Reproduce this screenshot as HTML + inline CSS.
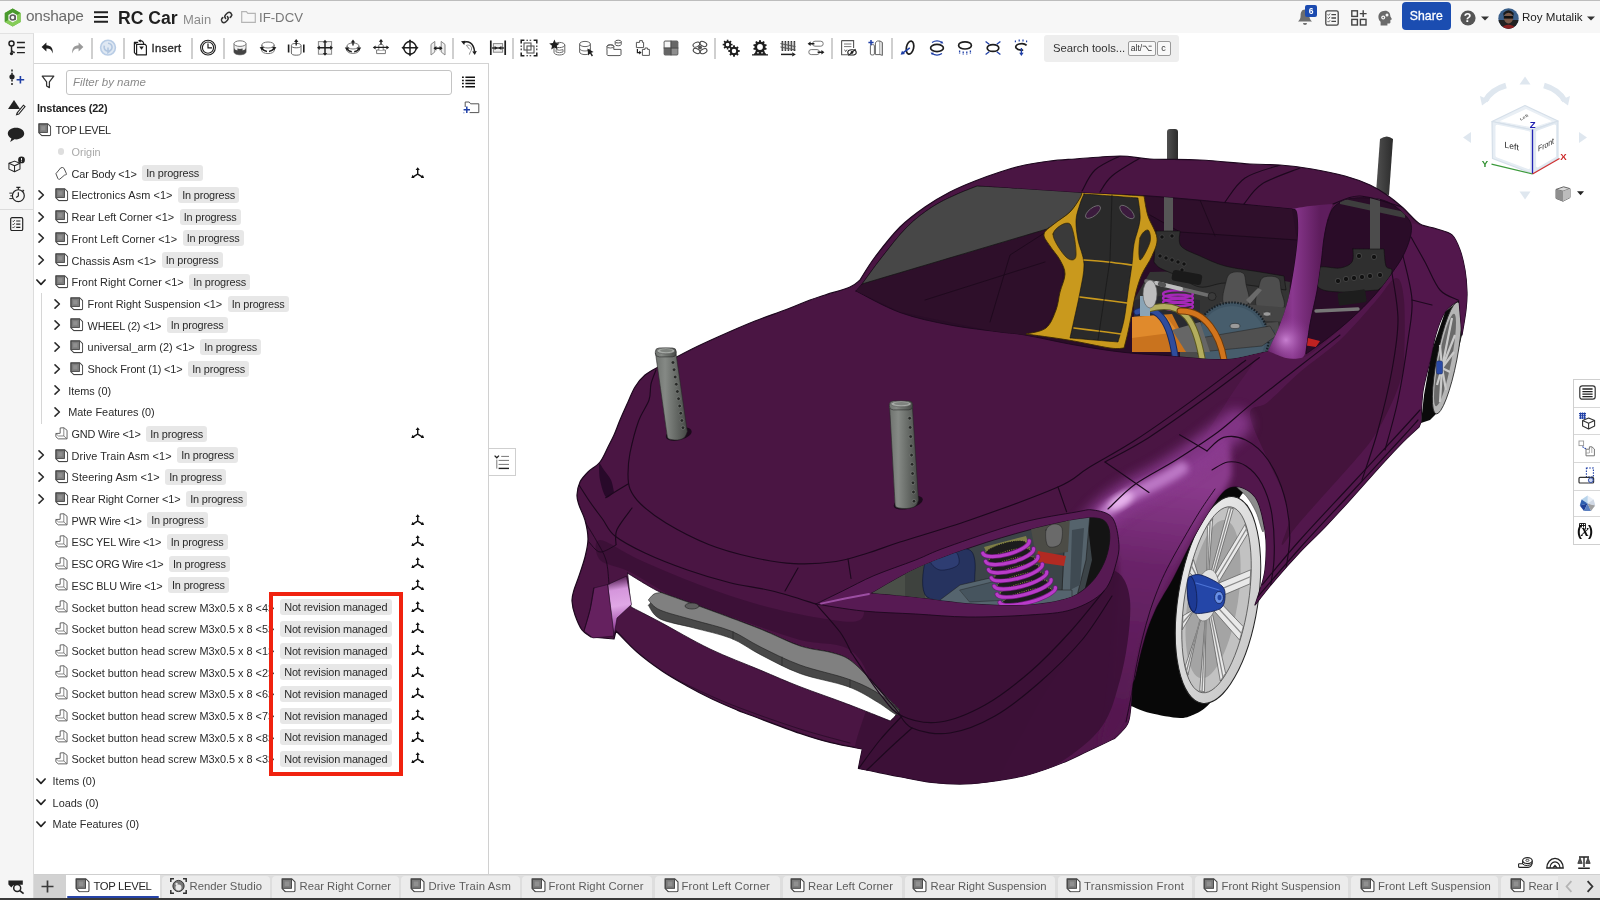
<!DOCTYPE html>
<html lang="en">
<head>
<meta charset="utf-8">
<title>RC Car | TOP LEVEL</title>
<style>
*{box-sizing:border-box;margin:0;padding:0}
html,body{width:1600px;height:900px;overflow:hidden;background:#fff}
body{font-family:"Liberation Sans",sans-serif;color:#222;font-size:12px;position:relative}
.abs{position:absolute}
#panelc,#hdrc,#tbc,#tabsc,#sidec,#view{will-change:transform}
svg{display:block;overflow:visible}
/* header */
#hdr{left:0;top:0;width:1600px;height:33px;background:#f7f7f7;border-top:1px solid #bdbdbd}
#hdrc .t{position:absolute;white-space:nowrap;height:auto}
/* sidebar */
#side{left:0;top:33px;width:33.5px;height:865px;background:#f5f5f5;border-right:1px solid #dcdcdc;border-top:1px solid #e2e2e2}
/* toolbar */
#tb{left:34px;top:33px;width:1566px;height:30px;background:#fff}
.sep{position:absolute;top:6px;width:1px;height:19px;background:#cfcfcf}
/* panel */
#panel{left:34px;top:63px;width:455px;height:811px;background:#fff;border-top:1px solid #d4d4d4;border-right:1px solid #d0d0d0}
#filter{border:1px solid #c4c4c4;border-radius:3px;background:#fff}
#filter span{position:absolute;left:6px;top:5px;font-style:italic;color:#8a8a8a;font-size:11.5px}
.t{font-size:10.9px;line-height:16px;height:16px;white-space:nowrap}
.bd{font-size:10.9px;line-height:16px;height:16px;white-space:nowrap;background:#e7e7e7;border-radius:3px;color:#2a2a2a;padding-left:4.2px}
.tt{font-size:11.3px;line-height:16px;height:16px;white-space:nowrap}
/* tabs */
#tabs{left:34px;top:874px;width:1566px;height:24px;background:#dedede;border-top:1px solid #cfcfcf}
.tab{position:absolute;top:1px;height:23px;background:#eaeaea;border-radius:4px 4px 0 0;font-size:12px;color:#5a5a5a;white-space:nowrap}
.tab span{position:absolute;top:4px}
#botline{left:0;top:898.4px;width:1600px;height:1.6px;background:#3a3a3a}
</style>
</head>
<body>
<svg width="0" height="0" style="position:absolute"><defs>
<symbol id="i-asm" viewBox="0 0 14 14"><path d="M.8,.8 H10.2 L13.2,3.8 V12 Q13.2,13.2 12,13.2 H4 L.8,10 Z" fill="#fff" stroke="#444" stroke-width="1.05" stroke-linejoin="round"/><rect x="1.3" y="1.3" width="8.6" height="8.6" fill="#7c7c7c" stroke="#454545" stroke-width=".9"/><rect x="3.4" y="3.4" width="4.4" height="4.4" fill="#909090"/></symbol>
<symbol id="i-part" viewBox="0 0 14 14"><path d="M5.4,1 L9.2,.8 L12.6,3.4 V12.4 H3.4 L.9,10.2 V6.8 L5.4,6.6 Z" fill="#fff" stroke="#555" stroke-width=".95" stroke-linejoin="round"/><path d="M9.2,.8 V9.4 H3.6 M9.2,9.4 L12.4,12.2 M.9,6.8 L3.6,9.4" fill="none" stroke="#666" stroke-width=".8"/></symbol>
<symbol id="i-surf" viewBox="0 0 14 14"><path d="M1,7.2 L6.2,.9 Q8.6,-.2 9.8,1.6 L12.2,7 Q13,8.2 11.4,8.4 L10.2,8.8 L5,13.2 Q3.6,13.6 3,12.2 Z" fill="#fff" stroke="#444" stroke-width="1" stroke-linejoin="round"/></symbol>
<symbol id="i-mate" viewBox="0 0 14 14"><path d="M7,7.4 V2 M7,7.4 L1.8,10.6 M7,7.4 L12.2,10.6" stroke="#111" stroke-width="1.5" fill="none"/><path d="M7,.2 L9.2,3.2 H4.8Z M.3,11.6 L1.6,8.2 L3.8,11.6Z M13.7,11.6 L12.4,8.2 L10.2,11.6Z" fill="#111"/></symbol>
<symbol id="i-chr" viewBox="0 0 10 12"><path d="M3,1.9 L7.4,6 L3,10.1" fill="none" stroke="#2a2a2a" stroke-width="1.55" stroke-linecap="round" stroke-linejoin="round"/></symbol>
<symbol id="i-chd" viewBox="0 0 12 10"><path d="M1.9,3 L6,7.4 L10.1,3" fill="none" stroke="#222" stroke-width="1.7" stroke-linecap="round" stroke-linejoin="round"/></symbol>
</defs></svg>

<!-- VIEWPORT -->
<div class="abs" id="view" style="left:0;top:0;width:1600px;height:900px;background:#fff">
<svg class="abs" style="left:0;top:0" width="1600" height="900" viewBox="0 0 1600 900">
<defs>
<linearGradient id="gpost" x1="0" x2="1" y1="0" y2="0"><stop offset="0" stop-color="#6f736f"/><stop offset=".3" stop-color="#858985"/><stop offset=".6" stop-color="#6a6e6a"/><stop offset="1" stop-color="#454845"/></linearGradient>
<linearGradient id="gpostd" x1="0" x2="1" y1="0" y2="0"><stop offset="0" stop-color="#505050"/><stop offset="1" stop-color="#2c2c2c"/></linearGradient>
<radialGradient id="gfender" cx="1112" cy="500" r="150" gradientUnits="userSpaceOnUse" gradientTransform="rotate(-38 1112 500) scale(1 .45) translate(0 610)"><stop offset="0" stop-color="#d79be0"/><stop offset=".12" stop-color="#a24fa8"/><stop offset=".4" stop-color="#6a226a"/><stop offset="1" stop-color="#4a1747" stop-opacity="0"/></radialGradient>
<linearGradient id="gflap" x1="612" y1="578" x2="622" y2="634" gradientUnits="userSpaceOnUse"><stop offset="0" stop-color="#4e184c"/><stop offset=".22" stop-color="#d596dc"/><stop offset=".5" stop-color="#e0a8e6"/><stop offset=".8" stop-color="#a858ae"/><stop offset="1" stop-color="#7a2c7c"/></linearGradient>
<linearGradient id="gpillar" x1="1270" y1="0" x2="1320" y2="0" gradientUnits="userSpaceOnUse"><stop offset="0" stop-color="#611e61"/><stop offset=".45" stop-color="#8a388f"/><stop offset="1" stop-color="#5e1d5d"/></linearGradient>
<radialGradient id="gpillarhi" cx="1286" cy="340" r="26" gradientUnits="userSpaceOnUse"><stop offset="0" stop-color="#c77fd0"/><stop offset="1" stop-color="#8a3690" stop-opacity="0"/></radialGradient>
<linearGradient id="grim" x1="0" x2="1" y1="0" y2="1"><stop offset="0" stop-color="#efefef"/><stop offset="1" stop-color="#c4c4c4"/></linearGradient>
<filter id="bl6" x="-0.3" y="-0.3" width="1.6" height="1.6"><feGaussianBlur stdDeviation="6"/></filter><filter id="bl3" x="-0.3" y="-0.3" width="1.6" height="1.6"><feGaussianBlur stdDeviation="3"/></filter><clipPath id="cbody"><path d="M577.0,495.0C577.2,491.2 578.2,485.8 580.0,482.0C581.8,478.2 584.7,475.3 588.0,472.0C591.3,468.7 596.7,466.2 600.0,462.0C603.3,457.8 605.7,451.5 608.0,447.0C610.3,442.5 612.0,439.5 614.0,435.0C616.0,430.5 617.7,425.5 620.0,420.0C622.3,414.5 625.5,407.5 628.0,402.0C630.5,396.5 632.2,391.5 635.0,387.0C637.8,382.5 640.8,378.5 645.0,375.0C649.2,371.5 652.2,370.3 660.0,366.0C667.8,361.7 682.0,354.0 692.0,349.0C702.0,344.0 709.5,340.7 720.0,336.0C730.5,331.3 744.2,325.3 755.0,321.0C765.8,316.7 775.8,313.5 785.0,310.0C794.2,306.5 803.3,302.5 810.0,300.0C816.7,297.5 818.3,297.2 825.0,295.0C831.7,292.8 844.2,289.5 850.0,287.0C855.8,284.5 858.3,281.2 860.0,280.0C862.5,276.2 868.3,265.8 875.0,257.0C881.7,248.2 891.7,235.3 900.0,227.0C908.3,218.7 916.7,212.8 925.0,207.0C933.3,201.2 941.7,196.3 950.0,192.0C958.3,187.7 966.7,184.3 975.0,181.0C983.3,177.7 991.7,174.7 1000.0,172.0C1008.3,169.3 1016.7,166.8 1025.0,165.0C1033.3,163.2 1041.7,162.0 1050.0,161.0C1058.3,160.0 1063.3,159.8 1075.0,159.0C1086.7,158.2 1107.5,156.0 1120.0,156.0C1132.5,156.0 1136.7,158.3 1150.0,159.0C1163.3,159.7 1183.3,159.2 1200.0,160.0C1216.7,160.8 1236.7,163.2 1250.0,164.0C1263.3,164.8 1269.7,164.2 1280.0,165.0C1290.3,165.8 1301.2,167.2 1312.0,169.0C1322.8,170.8 1335.3,173.3 1345.0,176.0C1354.7,178.7 1363.0,181.8 1370.0,185.0C1377.0,188.2 1381.7,191.3 1387.0,195.0C1392.3,198.7 1397.3,202.8 1402.0,207.0C1406.7,211.2 1411.7,217.0 1415.0,220.0C1418.3,223.0 1418.3,223.5 1422.0,225.0C1425.7,226.5 1432.0,227.3 1437.0,229.0C1442.0,230.7 1448.2,231.5 1452.0,235.0C1455.8,238.5 1457.8,244.2 1460.0,250.0C1462.2,255.8 1463.8,263.0 1465.0,270.0C1466.2,277.0 1466.8,285.3 1467.0,292.0C1467.2,298.7 1466.8,302.8 1466.0,310.0C1465.2,317.2 1462.7,330.8 1462.0,335.0C1461.5,329.2 1459.5,305.8 1459.0,300.0C1456.7,302.0 1448.8,306.3 1445.0,312.0C1441.2,317.7 1438.5,325.8 1436.0,334.0C1433.5,342.2 1432.2,351.5 1430.0,361.0C1427.8,370.5 1424.5,380.8 1423.0,391.0C1421.5,401.2 1421.3,416.8 1421.0,422.0C1420.7,422.8 1419.3,426.2 1419.0,427.0C1415.8,430.0 1407.3,437.5 1400.0,445.0C1392.7,452.5 1383.3,462.8 1375.0,472.0C1366.7,481.2 1358.3,490.8 1350.0,500.0C1341.7,509.2 1333.3,518.3 1325.0,527.0C1316.7,535.7 1308.3,543.2 1300.0,552.0C1291.7,560.8 1282.5,571.2 1275.0,580.0C1267.5,588.8 1258.3,600.8 1255.0,605.0C1255.8,602.5 1258.3,595.8 1260.0,590.0C1261.7,584.2 1264.0,578.3 1265.0,570.0C1266.0,561.7 1266.5,549.2 1266.0,540.0C1265.5,530.8 1263.8,522.2 1262.0,515.0C1260.2,507.8 1258.7,501.7 1255.0,497.0C1251.3,492.3 1245.0,488.2 1240.0,487.0C1235.0,485.8 1230.0,486.2 1225.0,490.0C1220.0,493.8 1215.0,502.5 1210.0,510.0C1205.0,517.5 1199.7,526.7 1195.0,535.0C1190.3,543.3 1185.8,552.5 1182.0,560.0C1178.2,567.5 1175.3,573.8 1172.0,580.0C1168.7,586.2 1164.8,592.0 1162.0,597.0C1159.2,602.0 1157.5,604.5 1155.0,610.0C1152.5,615.5 1149.5,622.5 1147.0,630.0C1144.5,637.5 1142.0,647.2 1140.0,655.0C1138.0,662.8 1136.3,672.0 1135.0,677.0C1133.7,682.0 1133.1,679.9 1132.4,685.0C1131.7,690.1 1131.5,701.1 1130.7,707.6C1129.9,714.1 1130.0,719.1 1127.5,724.0C1125.0,728.9 1118.8,734.3 1116.0,737.0C1113.2,739.7 1115.8,737.6 1111.0,740.0C1106.2,742.4 1095.2,747.7 1087.0,751.5C1078.8,755.3 1071.5,759.2 1062.0,763.0C1052.5,766.8 1040.8,771.2 1030.0,774.2C1019.2,777.2 1007.8,779.1 997.0,780.7C986.2,782.3 975.8,783.7 965.0,784.0C954.2,784.3 942.8,783.6 932.0,782.4C921.2,781.2 909.0,778.4 900.0,776.7C891.0,775.0 884.9,773.7 878.0,772.3C871.1,770.9 861.7,769.0 858.4,768.4C859.0,765.2 861.6,752.2 862.3,749.0C857.1,748.0 841.4,745.3 831.0,742.7C820.6,740.1 813.5,738.0 800.0,733.4C786.5,728.8 760.5,718.9 750.0,715.0C739.5,711.1 743.3,712.7 737.0,710.0C730.7,707.3 720.3,703.0 712.0,699.0C703.7,695.0 695.3,690.7 687.0,686.0C678.7,681.3 670.3,676.7 662.0,671.0C653.7,665.3 644.7,658.7 637.0,652.0C629.3,645.3 619.5,634.5 616.0,631.0C615.7,632.3 614.3,637.7 614.0,639.0C610.2,638.7 594.8,637.3 591.0,637.0C589.5,635.8 584.7,633.7 582.0,630.0C579.3,626.3 576.7,619.8 575.0,615.0C573.3,610.2 572.2,605.2 572.0,601.0C571.8,596.8 572.8,594.2 574.0,590.0C575.2,585.8 577.2,581.5 579.0,576.0C580.8,570.5 583.5,563.2 585.0,557.0C586.5,550.8 588.0,545.2 588.0,539.0C588.0,532.8 586.5,525.7 585.0,520.0C583.5,514.3 580.3,509.2 579.0,505.0C577.7,500.8 576.8,498.8 577.0,495.0Z"/></clipPath>
</defs>
<path d="M1421.0,423.0 L1424.0,395.0 L1432.0,350.0 L1445.0,312.0 L1459.0,300.0 L1462.0,335.0 L1453.0,372.0 L1446.0,396.0 L1438.0,412.0 L1430.0,420.0Z" fill="#0b0b0b" />
<ellipse cx="1447" cy="358" rx="10" ry="57" transform="rotate(11 1447 358)" fill="#b5b5b5" stroke="#222" stroke-width=".8"/>
<ellipse cx="1445" cy="360" rx="6.5" ry="47" transform="rotate(11 1445 360)" fill="#6a6a6a"/>
<line x1="1442" y1="368" x2="1452" y2="318" stroke="#c9c9c9" stroke-width="2.2"/>
<line x1="1442" y1="368" x2="1455" y2="335" stroke="#c9c9c9" stroke-width="2.2"/>
<line x1="1442" y1="368" x2="1454" y2="352" stroke="#c9c9c9" stroke-width="2.2"/>
<line x1="1442" y1="368" x2="1450" y2="372" stroke="#c9c9c9" stroke-width="2.2"/>
<line x1="1442" y1="368" x2="1446" y2="390" stroke="#c9c9c9" stroke-width="2.2"/>
<line x1="1442" y1="368" x2="1440" y2="402" stroke="#c9c9c9" stroke-width="2.2"/>
<line x1="1442" y1="368" x2="1437" y2="385" stroke="#c9c9c9" stroke-width="2.2"/>
<line x1="1442" y1="368" x2="1440" y2="345" stroke="#c9c9c9" stroke-width="2.2"/>
<rect x="1436.5" y="361" width="6" height="13" rx="1.5" fill="#2a4aa6" stroke="#13245c" stroke-width=".5"/>
<rect x="1167" y="129" width="11" height="40" rx="3" fill="url(#gpostd)"/>
<path d="M1380,139 Q1387,134 1393,139 L1389,195 L1376,193Z" fill="url(#gpostd)" />
<path d="M1224.0,489.0C1231.2,482.2 1234.2,484.0 1238.0,484.0C1241.8,484.0 1245.5,488.2 1247.0,489.0C1245.2,491.7 1240.5,493.2 1236.0,505.0C1231.5,516.8 1223.7,537.5 1220.0,560.0C1216.3,582.5 1215.2,616.7 1214.0,640.0C1212.8,663.3 1213.2,690.0 1213.0,700.0C1211.7,701.3 1208.0,705.7 1205.0,708.0C1202.0,710.3 1199.2,712.3 1195.0,714.0C1190.8,715.7 1187.5,718.2 1180.0,718.0C1172.5,717.8 1158.2,715.0 1150.0,713.0C1141.8,711.0 1134.2,707.2 1131.0,706.0C1130.5,703.3 1126.5,701.0 1128.0,690.0C1129.5,679.0 1133.8,658.3 1140.0,640.0C1146.2,621.7 1155.8,599.2 1165.0,580.0C1174.2,560.8 1185.2,540.2 1195.0,525.0C1204.8,509.8 1216.8,495.8 1224.0,489.0Z" fill="#080808" />
<path d="M1236.0,486.0C1236.2,484.5 1244.3,485.8 1248.0,488.0C1251.7,490.2 1255.5,494.7 1258.0,499.0C1260.5,503.3 1262.2,508.5 1263.0,514.0C1263.8,519.5 1264.2,532.3 1263.0,532.0C1261.8,531.7 1258.7,517.8 1256.0,512.0C1253.3,506.2 1250.3,501.3 1247.0,497.0C1243.7,492.7 1235.8,487.5 1236.0,486.0Z" fill="#8d8d8d" stroke="#333" stroke-width="0.5" stroke-linejoin="round" stroke-linecap="round" />
<g transform="rotate(8.8 1218 600)">
<ellipse cx="1218" cy="600" rx="40" ry="104.5" fill="url(#grim)" stroke="#222" stroke-width="1"/>
<ellipse cx="1216.5" cy="600" rx="32" ry="94" fill="#c2c2c2" stroke="#3c3c3c" stroke-width=".7"/>
<ellipse cx="1213" cy="600" rx="25" ry="80" fill="#a4a4a4"/>
<path d="M1205,590 L1247.1,622.5 L1245.5,636.3 L1207,604Z" fill="#e9e9e9" stroke="#4a4a4a" stroke-width=".6" stroke-linejoin="round"/>
<line x1="1206" y1="597" x2="1246.3" y2="629.4" stroke="#8a8a8a" stroke-width="1.3"/>
<path d="M1205,590 L1236.7,671.2 L1232.7,679.7 L1207,604Z" fill="#e9e9e9" stroke="#4a4a4a" stroke-width=".6" stroke-linejoin="round"/>
<line x1="1206" y1="597" x2="1234.7" y2="675.5" stroke="#8a8a8a" stroke-width="1.3"/>
<path d="M1205,590 L1218.7,692.8 L1213.8,692.6 L1207,604Z" fill="#e9e9e9" stroke="#4a4a4a" stroke-width=".6" stroke-linejoin="round"/>
<line x1="1206" y1="597" x2="1216.2" y2="692.7" stroke="#8a8a8a" stroke-width="1.3"/>
<path d="M1205,590 L1199.8,678.9 L1195.8,670.2 L1207,604Z" fill="#e9e9e9" stroke="#4a4a4a" stroke-width=".6" stroke-linejoin="round"/>
<line x1="1206" y1="597" x2="1197.8" y2="674.5" stroke="#8a8a8a" stroke-width="1.3"/>
<path d="M1205,590 L1187.3,634.8 L1185.8,620.9 L1207,604Z" fill="#e9e9e9" stroke="#4a4a4a" stroke-width=".6" stroke-linejoin="round"/>
<line x1="1206" y1="597" x2="1186.6" y2="627.9" stroke="#8a8a8a" stroke-width="1.3"/>
<path d="M1205,590 L1185.9,577.5 L1187.5,563.7 L1207,604Z" fill="#e9e9e9" stroke="#4a4a4a" stroke-width=".6" stroke-linejoin="round"/>
<line x1="1206" y1="597" x2="1186.7" y2="570.6" stroke="#8a8a8a" stroke-width="1.3"/>
<path d="M1205,590 L1196.3,528.8 L1200.3,520.3 L1207,604Z" fill="#e9e9e9" stroke="#4a4a4a" stroke-width=".6" stroke-linejoin="round"/>
<line x1="1206" y1="597" x2="1198.3" y2="524.5" stroke="#8a8a8a" stroke-width="1.3"/>
<path d="M1205,590 L1214.3,507.2 L1219.2,507.4 L1207,604Z" fill="#e9e9e9" stroke="#4a4a4a" stroke-width=".6" stroke-linejoin="round"/>
<line x1="1206" y1="597" x2="1216.8" y2="507.3" stroke="#8a8a8a" stroke-width="1.3"/>
<path d="M1205,590 L1233.2,521.1 L1237.2,529.8 L1207,604Z" fill="#e9e9e9" stroke="#4a4a4a" stroke-width=".6" stroke-linejoin="round"/>
<line x1="1206" y1="597" x2="1235.2" y2="525.5" stroke="#8a8a8a" stroke-width="1.3"/>
<path d="M1205,590 L1245.7,565.2 L1247.2,579.1 L1207,604Z" fill="#e9e9e9" stroke="#4a4a4a" stroke-width=".6" stroke-linejoin="round"/>
<line x1="1206" y1="597" x2="1246.4" y2="572.1" stroke="#8a8a8a" stroke-width="1.3"/>
<ellipse cx="1206" cy="597" rx="12" ry="26" fill="#e2e2e2" stroke="#666" stroke-width=".6"/>
</g>
<path d="M1189.0,580.0C1190.0,575.8 1191.5,575.7 1194.0,575.0C1196.5,574.3 1199.3,574.2 1204.0,576.0C1208.7,577.8 1218.5,582.5 1222.0,586.0C1225.5,589.5 1225.2,593.3 1225.0,597.0C1224.8,600.7 1224.5,605.3 1221.0,608.0C1217.5,610.7 1208.7,612.3 1204.0,613.0C1199.3,613.7 1195.7,614.2 1193.0,612.0C1190.3,609.8 1188.7,605.3 1188.0,600.0C1187.3,594.7 1188.0,584.2 1189.0,580.0Z" fill="#2446a8" stroke="#0e1a4c" stroke-width="0.8" stroke-linejoin="round" stroke-linecap="round" />
<ellipse cx="1192" cy="594" rx="4.6" ry="18" fill="#1d3a94" stroke="#0e1a4c" stroke-width=".7" transform="rotate(-6 1192 594)"/>
<path d="M1196.0,583.0 L1219.0,590.0" fill="none" stroke="#4d74d6" stroke-width="1.2" stroke-linejoin="round" stroke-linecap="round" />
<ellipse cx="1219" cy="597.5" rx="4.4" ry="6" fill="#6a90e6" stroke="#0e1a4c" stroke-width=".7"/>
<ellipse cx="1219.5" cy="597.5" rx="2" ry="2.8" fill="#2446a8"/>
<path d="M577.0,495.0C577.2,491.2 578.2,485.8 580.0,482.0C581.8,478.2 584.7,475.3 588.0,472.0C591.3,468.7 596.7,466.2 600.0,462.0C603.3,457.8 605.7,451.5 608.0,447.0C610.3,442.5 612.0,439.5 614.0,435.0C616.0,430.5 617.7,425.5 620.0,420.0C622.3,414.5 625.5,407.5 628.0,402.0C630.5,396.5 632.2,391.5 635.0,387.0C637.8,382.5 640.8,378.5 645.0,375.0C649.2,371.5 652.2,370.3 660.0,366.0C667.8,361.7 682.0,354.0 692.0,349.0C702.0,344.0 709.5,340.7 720.0,336.0C730.5,331.3 744.2,325.3 755.0,321.0C765.8,316.7 775.8,313.5 785.0,310.0C794.2,306.5 803.3,302.5 810.0,300.0C816.7,297.5 818.3,297.2 825.0,295.0C831.7,292.8 844.2,289.5 850.0,287.0C855.8,284.5 858.3,281.2 860.0,280.0C862.5,276.2 868.3,265.8 875.0,257.0C881.7,248.2 891.7,235.3 900.0,227.0C908.3,218.7 916.7,212.8 925.0,207.0C933.3,201.2 941.7,196.3 950.0,192.0C958.3,187.7 966.7,184.3 975.0,181.0C983.3,177.7 991.7,174.7 1000.0,172.0C1008.3,169.3 1016.7,166.8 1025.0,165.0C1033.3,163.2 1041.7,162.0 1050.0,161.0C1058.3,160.0 1063.3,159.8 1075.0,159.0C1086.7,158.2 1107.5,156.0 1120.0,156.0C1132.5,156.0 1136.7,158.3 1150.0,159.0C1163.3,159.7 1183.3,159.2 1200.0,160.0C1216.7,160.8 1236.7,163.2 1250.0,164.0C1263.3,164.8 1269.7,164.2 1280.0,165.0C1290.3,165.8 1301.2,167.2 1312.0,169.0C1322.8,170.8 1335.3,173.3 1345.0,176.0C1354.7,178.7 1363.0,181.8 1370.0,185.0C1377.0,188.2 1381.7,191.3 1387.0,195.0C1392.3,198.7 1397.3,202.8 1402.0,207.0C1406.7,211.2 1411.7,217.0 1415.0,220.0C1418.3,223.0 1418.3,223.5 1422.0,225.0C1425.7,226.5 1432.0,227.3 1437.0,229.0C1442.0,230.7 1448.2,231.5 1452.0,235.0C1455.8,238.5 1457.8,244.2 1460.0,250.0C1462.2,255.8 1463.8,263.0 1465.0,270.0C1466.2,277.0 1466.8,285.3 1467.0,292.0C1467.2,298.7 1466.8,302.8 1466.0,310.0C1465.2,317.2 1462.7,330.8 1462.0,335.0C1461.5,329.2 1459.5,305.8 1459.0,300.0C1456.7,302.0 1448.8,306.3 1445.0,312.0C1441.2,317.7 1438.5,325.8 1436.0,334.0C1433.5,342.2 1432.2,351.5 1430.0,361.0C1427.8,370.5 1424.5,380.8 1423.0,391.0C1421.5,401.2 1421.3,416.8 1421.0,422.0C1420.7,422.8 1419.3,426.2 1419.0,427.0C1415.8,430.0 1407.3,437.5 1400.0,445.0C1392.7,452.5 1383.3,462.8 1375.0,472.0C1366.7,481.2 1358.3,490.8 1350.0,500.0C1341.7,509.2 1333.3,518.3 1325.0,527.0C1316.7,535.7 1308.3,543.2 1300.0,552.0C1291.7,560.8 1282.5,571.2 1275.0,580.0C1267.5,588.8 1258.3,600.8 1255.0,605.0C1255.8,602.5 1258.3,595.8 1260.0,590.0C1261.7,584.2 1264.0,578.3 1265.0,570.0C1266.0,561.7 1266.5,549.2 1266.0,540.0C1265.5,530.8 1263.8,522.2 1262.0,515.0C1260.2,507.8 1258.7,501.7 1255.0,497.0C1251.3,492.3 1245.0,488.2 1240.0,487.0C1235.0,485.8 1230.0,486.2 1225.0,490.0C1220.0,493.8 1215.0,502.5 1210.0,510.0C1205.0,517.5 1199.7,526.7 1195.0,535.0C1190.3,543.3 1185.8,552.5 1182.0,560.0C1178.2,567.5 1175.3,573.8 1172.0,580.0C1168.7,586.2 1164.8,592.0 1162.0,597.0C1159.2,602.0 1157.5,604.5 1155.0,610.0C1152.5,615.5 1149.5,622.5 1147.0,630.0C1144.5,637.5 1142.0,647.2 1140.0,655.0C1138.0,662.8 1136.3,672.0 1135.0,677.0C1133.7,682.0 1133.1,679.9 1132.4,685.0C1131.7,690.1 1131.5,701.1 1130.7,707.6C1129.9,714.1 1130.0,719.1 1127.5,724.0C1125.0,728.9 1118.8,734.3 1116.0,737.0C1113.2,739.7 1115.8,737.6 1111.0,740.0C1106.2,742.4 1095.2,747.7 1087.0,751.5C1078.8,755.3 1071.5,759.2 1062.0,763.0C1052.5,766.8 1040.8,771.2 1030.0,774.2C1019.2,777.2 1007.8,779.1 997.0,780.7C986.2,782.3 975.8,783.7 965.0,784.0C954.2,784.3 942.8,783.6 932.0,782.4C921.2,781.2 909.0,778.4 900.0,776.7C891.0,775.0 884.9,773.7 878.0,772.3C871.1,770.9 861.7,769.0 858.4,768.4C859.0,765.2 861.6,752.2 862.3,749.0C857.1,748.0 841.4,745.3 831.0,742.7C820.6,740.1 813.5,738.0 800.0,733.4C786.5,728.8 760.5,718.9 750.0,715.0C739.5,711.1 743.3,712.7 737.0,710.0C730.7,707.3 720.3,703.0 712.0,699.0C703.7,695.0 695.3,690.7 687.0,686.0C678.7,681.3 670.3,676.7 662.0,671.0C653.7,665.3 644.7,658.7 637.0,652.0C629.3,645.3 619.5,634.5 616.0,631.0C615.7,632.3 614.3,637.7 614.0,639.0C610.2,638.7 594.8,637.3 591.0,637.0C589.5,635.8 584.7,633.7 582.0,630.0C579.3,626.3 576.7,619.8 575.0,615.0C573.3,610.2 572.2,605.2 572.0,601.0C571.8,596.8 572.8,594.2 574.0,590.0C575.2,585.8 577.2,581.5 579.0,576.0C580.8,570.5 583.5,563.2 585.0,557.0C586.5,550.8 588.0,545.2 588.0,539.0C588.0,532.8 586.5,525.7 585.0,520.0C583.5,514.3 580.3,509.2 579.0,505.0C577.7,500.8 576.8,498.8 577.0,495.0Z" fill="#4a1543" stroke="#1d081e" stroke-width="1.2" stroke-linejoin="round" stroke-linecap="round" />
<g clip-path="url(#cbody)">
<path d="M1267.0,351.0C1276.3,348.2 1290.5,360.2 1301.0,358.0C1311.5,355.8 1321.5,344.7 1330.0,338.0C1338.5,331.3 1344.7,325.0 1352.0,318.0C1359.3,311.0 1367.3,303.5 1374.0,296.0C1380.7,288.5 1387.2,279.7 1392.0,273.0C1396.8,266.3 1399.8,262.0 1403.0,256.0C1406.2,250.0 1409.7,242.3 1411.0,237.0C1412.3,231.7 1409.2,225.8 1411.0,224.0C1412.8,222.2 1415.2,224.2 1422.0,226.0C1428.8,227.8 1444.0,231.0 1452.0,235.0C1460.0,239.0 1465.3,239.2 1470.0,250.0C1474.7,260.8 1480.0,285.0 1480.0,300.0C1480.0,315.0 1478.3,316.7 1470.0,340.0C1461.7,363.3 1450.0,410.0 1430.0,440.0C1410.0,470.0 1379.2,490.0 1350.0,520.0C1320.8,550.0 1293.3,580.0 1255.0,620.0C1216.7,660.0 1162.5,730.0 1120.0,760.0C1077.5,790.0 1015.0,806.7 1000.0,800.0C985.0,793.3 1016.7,746.7 1030.0,720.0C1043.3,693.3 1064.2,665.0 1080.0,640.0C1095.8,615.0 1110.0,595.0 1125.0,570.0C1140.0,545.0 1155.0,515.0 1170.0,490.0C1185.0,465.0 1202.5,439.2 1215.0,420.0C1227.5,400.8 1236.3,386.5 1245.0,375.0C1253.7,363.5 1257.7,353.8 1267.0,351.0Z" fill="#54184e" opacity=".85"/>
<linearGradient id="gfs" x1="1150" y1="480" x2="1120" y2="720" gradientUnits="userSpaceOnUse"><stop offset="0" stop-color="#8a3a8c"/><stop offset=".35" stop-color="#6a2469"/><stop offset="1" stop-color="#54184f"/></linearGradient>
<path d="M1104.0,520.0C1105.0,513.3 1113.2,510.0 1120.0,505.0C1126.8,500.0 1135.0,496.2 1145.0,490.0C1155.0,483.8 1169.7,474.3 1180.0,468.0C1190.3,461.7 1199.5,457.2 1207.0,452.0C1214.5,446.8 1220.8,434.0 1225.0,437.0C1229.2,440.0 1232.0,461.2 1232.0,470.0C1232.0,478.8 1228.7,483.3 1225.0,490.0C1221.3,496.7 1215.0,502.5 1210.0,510.0C1205.0,517.5 1199.7,526.7 1195.0,535.0C1190.3,543.3 1187.5,549.7 1182.0,560.0C1176.5,570.3 1167.8,585.3 1162.0,597.0C1156.2,608.7 1150.7,620.3 1147.0,630.0C1143.3,639.7 1142.3,645.0 1140.0,655.0C1137.7,665.0 1134.5,681.2 1133.0,690.0C1131.5,698.8 1133.5,700.5 1131.0,708.0C1128.5,715.5 1123.2,728.8 1118.0,735.0C1112.8,741.2 1101.7,750.8 1100.0,745.0C1098.3,739.2 1105.7,717.5 1108.0,700.0C1110.3,682.5 1112.3,660.0 1114.0,640.0C1115.7,620.0 1118.0,595.8 1118.0,580.0C1118.0,564.2 1116.3,555.0 1114.0,545.0C1111.7,535.0 1103.0,526.7 1104.0,520.0Z" fill="url(#gfs)" filter="url(#bl3)"/>
<path d="M1250.0,414.0C1250.0,404.3 1259.7,409.0 1268.0,402.0C1276.3,395.0 1288.0,382.3 1300.0,372.0C1312.0,361.7 1327.5,351.7 1340.0,340.0C1352.5,328.3 1365.7,312.3 1375.0,302.0C1384.3,291.7 1391.2,278.3 1396.0,278.0C1400.8,277.7 1402.7,286.3 1404.0,300.0C1405.3,313.7 1404.7,346.3 1404.0,360.0C1403.3,373.7 1402.5,373.8 1400.0,382.0C1397.5,390.2 1393.5,399.7 1389.0,409.0C1384.5,418.3 1379.5,428.5 1373.0,438.0C1366.5,447.5 1362.2,452.0 1350.0,466.0C1337.8,480.0 1311.3,508.8 1300.0,522.0C1288.7,535.2 1283.8,545.3 1282.0,545.0C1280.2,544.7 1288.7,528.3 1289.0,520.0C1289.3,511.7 1287.5,505.0 1284.0,495.0C1280.5,485.0 1273.7,473.5 1268.0,460.0C1262.3,446.5 1250.0,423.7 1250.0,414.0Z" fill="#44133c" />
<path d="M600.0,540.0C606.7,540.0 623.3,552.5 640.0,560.0C656.7,567.5 680.0,577.5 700.0,585.0C720.0,592.5 740.0,599.5 760.0,605.0C780.0,610.5 803.3,615.5 820.0,618.0C836.7,620.5 852.0,624.0 860.0,620.0C868.0,616.0 861.3,597.3 868.0,594.0C874.7,590.7 884.7,597.7 900.0,600.0C915.3,602.3 940.0,606.3 960.0,608.0C980.0,609.7 1001.7,611.0 1020.0,610.0C1038.3,609.0 1055.0,608.7 1070.0,602.0C1085.0,595.3 1100.0,570.3 1110.0,570.0C1120.0,569.7 1128.3,581.7 1130.0,600.0C1131.7,618.3 1126.7,656.7 1120.0,680.0C1113.3,703.3 1110.0,721.7 1090.0,740.0C1070.0,758.3 1031.7,782.5 1000.0,790.0C968.3,797.5 924.2,790.0 900.0,785.0C875.8,780.0 860.0,775.8 855.0,760.0C850.0,744.2 870.8,708.3 870.0,690.0C869.2,671.7 861.7,658.3 850.0,650.0C838.3,641.7 818.3,645.0 800.0,640.0C781.7,635.0 760.0,626.7 740.0,620.0C720.0,613.3 698.3,608.0 680.0,600.0C661.7,592.0 643.3,578.7 630.0,572.0C616.7,565.3 605.0,565.3 600.0,560.0C595.0,554.7 593.3,540.0 600.0,540.0Z" fill="#3b1036" opacity=".9"/>
<path d="M1092,528 C1105,508 1130,494 1150,484 C1175,471 1205,450 1236,424" fill="none" stroke="#8a3a90" stroke-width="30" stroke-linecap="round" filter="url(#bl6)" opacity=".85"/>
<path d="M1104,514 C1112,504 1128,496 1143,489 C1158,482 1170,476 1182,468" fill="none" stroke="#c27fcc" stroke-width="13" stroke-linecap="round" filter="url(#bl3)" opacity=".9"/>
<ellipse cx="1121" cy="501" rx="14" ry="6" transform="rotate(-32 1121 501)" fill="#e9b6ee" filter="url(#bl3)"/>
</g>
<clipPath id="cgreen"><path d="M856.0,291.0C857.0,289.8 861.0,285.2 862.0,284.0C865.3,279.5 874.5,266.5 882.0,257.0C889.5,247.5 898.7,235.3 907.0,227.0C915.3,218.7 924.0,212.3 932.0,207.0C940.0,201.7 947.5,198.5 955.0,195.0C962.5,191.5 973.3,187.5 977.0,186.0C980.8,186.2 983.7,186.4 1000.0,187.5C1016.3,188.6 1050.0,191.1 1075.0,192.5C1100.0,193.9 1125.0,194.3 1150.0,196.0C1175.0,197.7 1201.3,200.3 1225.0,202.5C1248.7,204.7 1280.8,207.9 1292.0,209.0C1292.8,209.5 1296.0,207.7 1297.0,212.0C1298.0,216.3 1298.5,225.5 1298.0,235.0C1297.5,244.5 1295.7,258.2 1294.0,269.0C1292.3,279.8 1290.5,290.3 1288.0,300.0C1285.5,309.7 1282.3,318.5 1279.0,327.0C1275.7,335.5 1269.8,347.0 1268.0,351.0C1266.7,351.2 1267.2,351.2 1260.0,352.5C1252.8,353.8 1239.2,358.4 1225.0,359.0C1210.8,359.6 1191.7,357.1 1175.0,356.0C1158.3,354.9 1141.7,354.3 1125.0,352.5C1108.3,350.7 1091.7,347.9 1075.0,345.0C1058.3,342.1 1037.5,337.2 1025.0,335.0C1012.5,332.8 1012.5,333.7 1000.0,332.0C987.5,330.3 966.7,328.2 950.0,325.0C933.3,321.8 915.7,318.2 900.0,312.5C884.3,306.8 863.3,294.6 856.0,291.0Z"/></clipPath>
<path d="M856.0,291.0C857.0,289.8 861.0,285.2 862.0,284.0C865.3,279.5 874.5,266.5 882.0,257.0C889.5,247.5 898.7,235.3 907.0,227.0C915.3,218.7 924.0,212.3 932.0,207.0C940.0,201.7 947.5,198.5 955.0,195.0C962.5,191.5 973.3,187.5 977.0,186.0C980.8,186.2 983.7,186.4 1000.0,187.5C1016.3,188.6 1050.0,191.1 1075.0,192.5C1100.0,193.9 1125.0,194.3 1150.0,196.0C1175.0,197.7 1201.3,200.3 1225.0,202.5C1248.7,204.7 1280.8,207.9 1292.0,209.0C1292.8,209.5 1296.0,207.7 1297.0,212.0C1298.0,216.3 1298.5,225.5 1298.0,235.0C1297.5,244.5 1295.7,258.2 1294.0,269.0C1292.3,279.8 1290.5,290.3 1288.0,300.0C1285.5,309.7 1282.3,318.5 1279.0,327.0C1275.7,335.5 1269.8,347.0 1268.0,351.0C1266.7,351.2 1267.2,351.2 1260.0,352.5C1252.8,353.8 1239.2,358.4 1225.0,359.0C1210.8,359.6 1191.7,357.1 1175.0,356.0C1158.3,354.9 1141.7,354.3 1125.0,352.5C1108.3,350.7 1091.7,347.9 1075.0,345.0C1058.3,342.1 1037.5,337.2 1025.0,335.0C1012.5,332.8 1012.5,333.7 1000.0,332.0C987.5,330.3 966.7,328.2 950.0,325.0C933.3,321.8 915.7,318.2 900.0,312.5C884.3,306.8 863.3,294.6 856.0,291.0Z" fill="#2a0d28" stroke="#1d081e" stroke-width="0.9" stroke-linejoin="round" stroke-linecap="round" />
<g clip-path="url(#cgreen)">
<path d="M856.0,291.0 L862.0,284.0 L1047.0,229.0 L1062.0,260.0 L1062.0,290.0 L1050.0,320.0 L1035.0,340.0 L900.0,312.0Z" fill="#2e0f2a" />
<path d="M1140.0,196.0 L1292.0,209.0 L1297.0,240.0 L1180.0,232.0 L1150.0,215.0Z" fill="#2f0f2b" />
<path d="M862.0,284.0C865.3,279.5 874.5,266.5 882.0,257.0C889.5,247.5 898.7,235.3 907.0,227.0C915.3,218.7 924.0,212.3 932.0,207.0C940.0,201.7 947.5,198.5 955.0,195.0C962.5,191.5 973.3,187.5 977.0,186.0C985.8,186.4 1012.0,187.5 1030.0,188.5C1048.0,189.5 1075.8,191.4 1085.0,192.0C1082.5,195.3 1076.3,205.8 1070.0,212.0C1063.7,218.2 1050.8,226.2 1047.0,229.0C1016.2,238.2 892.8,274.8 862.0,284.0Z" fill="#474747" stroke="#161616" stroke-width="0.8" stroke-linejoin="round" stroke-linecap="round" />
<path d="M925.0,300.0 L1045.0,262.0" fill="none" stroke="#190719" stroke-width="0.7" stroke-linejoin="round" stroke-linecap="round" />
<path d="M990.0,322.0 L1010.0,255.0 L1046.0,232.0" fill="none" stroke="#190719" stroke-width="0.7" stroke-linejoin="round" stroke-linecap="round" />
<path d="M1150.0,215.0 L1180.0,232.0 L1297.0,240.0" fill="none" stroke="#190719" stroke-width="0.7" stroke-linejoin="round" stroke-linecap="round" />
<path d="M1200.0,200.0 L1215.0,236.0" fill="none" stroke="#190719" stroke-width="0.7" stroke-linejoin="round" stroke-linecap="round" />
<path d="M1150.0,272.0 L1225.0,270.0 L1290.0,282.0 L1286.0,352.0 L1134.0,352.0 L1134.0,300.0Z" fill="#343434" />
<path d="M1134.0,300.0 L1160.0,296.0 L1200.0,300.0 L1200.0,330.0 L1134.0,330.0Z" fill="#2a2a30" />
<rect x="1164" y="196" width="9" height="38" fill="#565656"/>
<path d="M1156.0,231.0C1160.0,231.0 1176.0,231.0 1180.0,231.0C1180.2,233.5 1177.7,241.8 1181.0,246.0C1184.3,250.2 1192.7,252.7 1200.0,256.0C1207.3,259.3 1215.0,263.3 1225.0,266.0C1235.0,268.7 1250.2,270.3 1260.0,272.0C1269.8,273.7 1280.0,275.3 1284.0,276.0C1284.3,278.3 1285.7,287.7 1286.0,290.0C1280.8,289.3 1265.2,287.2 1255.0,286.0C1244.8,284.8 1234.2,282.8 1225.0,283.0C1215.8,283.2 1207.8,288.2 1200.0,287.0C1192.2,285.8 1184.7,279.2 1178.0,276.0C1171.3,272.8 1164.0,270.3 1160.0,268.0C1156.0,265.7 1155.0,263.0 1154.0,262.0C1154.3,256.8 1155.7,236.2 1156.0,231.0Z" fill="#303030" stroke="#111" stroke-width="0.6" stroke-linejoin="round" stroke-linecap="round" />
<circle cx="1162" cy="237" r="2.1" fill="#111" stroke="#555" stroke-width=".5"/>
<circle cx="1172" cy="236" r="2.1" fill="#111" stroke="#555" stroke-width=".5"/>
<circle cx="1160" cy="256" r="2.1" fill="#111" stroke="#555" stroke-width=".5"/>
<circle cx="1166" cy="258" r="2.1" fill="#111" stroke="#555" stroke-width=".5"/>
<circle cx="1172" cy="260" r="2.1" fill="#111" stroke="#555" stroke-width=".5"/>
<circle cx="1178" cy="262" r="2.1" fill="#111" stroke="#555" stroke-width=".5"/>
<circle cx="1184" cy="264" r="2.1" fill="#111" stroke="#555" stroke-width=".5"/>
<circle cx="1182" cy="270" r="2.1" fill="#111" stroke="#555" stroke-width=".5"/>
<path d="M1224.0,304.0C1220.3,300.3 1224.8,287.2 1226.0,282.0C1227.2,276.8 1228.2,274.5 1231.0,273.0C1233.8,271.5 1240.5,271.2 1243.0,273.0C1245.5,274.8 1245.2,278.8 1246.0,284.0C1246.8,289.2 1251.7,300.7 1248.0,304.0C1244.3,307.3 1227.7,307.7 1224.0,304.0Z" fill="#525252" stroke="#1e1e1e" stroke-width="0.6" stroke-linejoin="round" stroke-linecap="round" />
<path d="M1257.0,307.0C1253.0,303.3 1257.8,291.0 1259.0,286.0C1260.2,281.0 1260.8,278.3 1264.0,277.0C1267.2,275.7 1275.2,275.8 1278.0,278.0C1280.8,280.2 1280.2,285.0 1281.0,290.0C1281.8,295.0 1287.0,305.2 1283.0,308.0C1279.0,310.8 1261.0,310.7 1257.0,307.0Z" fill="#4e4e4e" stroke="#1e1e1e" stroke-width="0.6" stroke-linejoin="round" stroke-linecap="round" />
<path d="M1246.0,300.0 L1258.0,288.0 L1262.0,290.0 L1250.0,304.0Z" fill="#6a6a6a" />
<path d="M1220.0,302.0 L1290.0,308.0 L1286.0,322.0 L1222.0,318.0Z" fill="#454545" />
<path d="M1180.0,330.0 L1278.0,322.0 L1284.0,360.0 L1180.0,362.0Z" fill="#4b4b4b" />
<path d="M1228.0,326.0 L1275.0,330.0 L1272.0,352.0 L1232.0,352.0Z" fill="#3c4a55" />
<circle cx="1232" cy="339" r="36.5" fill="#3f5463" stroke="#161f26" stroke-width="2.2" stroke-dasharray="1.5 1.5"/>
<circle cx="1232" cy="339" r="33" fill="#475d6c"/>
<path d="M1200.0,338.0 L1270.0,326.0 L1276.0,336.0 L1262.0,346.0 L1200.0,352.0Z" fill="#505050" stroke="#222" stroke-width="0.5" stroke-linejoin="round" stroke-linecap="round" />
<ellipse cx="1235" cy="326" rx="5" ry="2.6" fill="#9a9a9a" stroke="#222" stroke-width=".5"/>
<ellipse cx="1267" cy="314" rx="4" ry="2.2" fill="#9a9a9a" stroke="#222" stroke-width=".5"/>
<path d="M1132.0,317.0 L1172.0,314.0 L1180.0,330.0 L1190.0,352.0 L1132.0,352.0Z" fill="#c9731e" />
<path d="M1132.0,317.0 L1165.0,315.0 L1178.0,332.0 L1132.0,338.0Z" fill="#e08a2c" />
<path d="M1172.0,330.0 L1200.0,322.0 L1210.0,352.0 L1186.0,352.0Z" fill="#666" />
<ellipse cx="1178" cy="294.0" rx="15" ry="3.6" fill="none" stroke="#a628b8" stroke-width="2.2"/>
<ellipse cx="1178" cy="298.2" rx="15" ry="3.6" fill="none" stroke="#a628b8" stroke-width="2.2"/>
<ellipse cx="1178" cy="302.4" rx="15" ry="3.6" fill="none" stroke="#a628b8" stroke-width="2.2"/>
<ellipse cx="1178" cy="306.6" rx="15" ry="3.6" fill="none" stroke="#a628b8" stroke-width="2.2"/>
<path d="M1146.0,281.0 L1170.0,286.0 L1211.0,296.0" fill="none" stroke="#6e6e6e" stroke-width="3.6" stroke-linejoin="round" stroke-linecap="round" />
<path d="M1156.0,283.0 L1181.0,289.0" fill="none" stroke="#bdbdbd" stroke-width="4" stroke-linejoin="round" stroke-linecap="round" />
<path d="M1160.0,284.0 L1164.0,285.0" fill="none" stroke="#555" stroke-width="4.4" stroke-linejoin="round" stroke-linecap="round" />
<circle cx="1212" cy="296.5" r="4" fill="#3a3a3a" stroke="#111" stroke-width=".5"/>
<rect x="1172" y="272" width="30" height="11" rx="3" fill="#1a1a1a" transform="rotate(10 1187 277)"/>
<path d="M1137,312 C1158,303 1170,322 1175,356" fill="none" stroke="#1a2a5c" stroke-width="7" stroke-linejoin="round" stroke-linecap="round" />
<path d="M1137,312 C1158,303 1170,322 1175,356" fill="none" stroke="#2f4c9c" stroke-width="5" stroke-linejoin="round" stroke-linecap="round" />
<path d="M1146,310 C1186,296 1196,326 1202,358" fill="none" stroke="#5c5a22" stroke-width="7" stroke-linejoin="round" stroke-linecap="round" />
<path d="M1146,310 C1186,296 1196,326 1202,358" fill="none" stroke="#b3ad5e" stroke-width="5" stroke-linejoin="round" stroke-linecap="round" />
<path d="M1180,311 C1206,310 1220,336 1224,360" fill="none" stroke="#6e3a0a" stroke-width="7" stroke-linejoin="round" stroke-linecap="round" />
<path d="M1180,311 C1206,310 1220,336 1224,360" fill="none" stroke="#d2741c" stroke-width="5" stroke-linejoin="round" stroke-linecap="round" />
<rect x="1140" y="296" width="10" height="20" fill="#8aa4b6"/>
<ellipse cx="1150" cy="294" rx="7" ry="14" fill="#bdbdbd" stroke="#555" stroke-width=".6"/>
<path d="M1082.0,192.0C1092.3,192.7 1133.7,195.3 1144.0,196.0C1144.7,199.3 1145.8,209.0 1148.0,216.0C1150.2,223.0 1156.3,231.3 1157.0,238.0C1157.7,244.7 1154.5,250.0 1152.0,256.0C1149.5,262.0 1144.7,268.0 1142.0,274.0C1139.3,280.0 1137.7,285.7 1136.0,292.0C1134.3,298.3 1133.3,305.3 1132.0,312.0C1130.7,318.7 1129.3,326.0 1128.0,332.0C1126.7,338.0 1124.7,345.3 1124.0,348.0C1121.7,348.0 1119.3,349.3 1110.0,348.0C1100.7,346.7 1082.0,342.3 1068.0,340.0C1054.0,337.7 1033.0,335.0 1026.0,334.0C1029.3,333.0 1041.0,332.0 1046.0,328.0C1051.0,324.0 1053.7,316.0 1056.0,310.0C1058.3,304.0 1058.5,298.0 1060.0,292.0C1061.5,286.0 1065.0,279.3 1065.0,274.0C1065.0,268.7 1062.5,264.7 1060.0,260.0C1057.5,255.3 1052.7,250.3 1050.0,246.0C1047.3,241.7 1043.3,237.7 1044.0,234.0C1044.7,230.3 1049.7,227.7 1054.0,224.0C1058.3,220.3 1065.7,216.3 1070.0,212.0C1074.3,207.7 1078.0,201.3 1080.0,198.0C1082.0,194.7 1081.7,193.0 1082.0,192.0Z" fill="#c9991d" stroke="#3a2a05" stroke-width="0.9" stroke-linejoin="round" stroke-linecap="round" />
<path d="M1084.0,194.0C1093.0,194.7 1129.0,197.3 1138.0,198.0C1138.3,201.7 1140.7,212.3 1140.0,220.0C1139.3,227.7 1135.3,236.7 1134.0,244.0C1132.7,251.3 1133.0,256.0 1132.0,264.0C1131.0,272.0 1129.3,282.7 1128.0,292.0C1126.7,301.3 1125.7,311.7 1124.0,320.0C1122.3,328.3 1119.0,338.3 1118.0,342.0C1110.0,341.3 1078.0,338.7 1070.0,338.0C1070.7,335.0 1072.3,327.7 1074.0,320.0C1075.7,312.3 1078.3,301.3 1080.0,292.0C1081.7,282.7 1084.3,272.7 1084.0,264.0C1083.7,255.3 1079.3,247.3 1078.0,240.0C1076.7,232.7 1075.7,226.0 1076.0,220.0C1076.3,214.0 1078.7,208.3 1080.0,204.0C1081.3,199.7 1083.3,195.7 1084.0,194.0Z" fill="#2a2a2a" stroke="#111" stroke-width="0.6" stroke-linejoin="round" stroke-linecap="round" />
<path d="M1053.0,234.0C1053.7,228.5 1066.2,220.3 1070.0,224.0C1073.8,227.7 1076.7,250.5 1076.0,256.0C1075.3,261.5 1069.8,260.7 1066.0,257.0C1062.2,253.3 1052.3,239.5 1053.0,234.0Z" fill="#3a3a3a" stroke="#3a2a05" stroke-width="0.7" stroke-linejoin="round" stroke-linecap="round" />
<path d="M1140.0,238.0C1141.3,233.0 1146.3,229.3 1148.0,230.0C1149.7,230.7 1151.3,237.0 1150.0,242.0C1148.7,247.0 1141.7,260.7 1140.0,260.0C1138.3,259.3 1138.7,243.0 1140.0,238.0Z" fill="#2a2a2a" stroke="#3a2a05" stroke-width="0.7" stroke-linejoin="round" stroke-linecap="round" />
<path d="M1084.0,260.0C1088.0,260.3 1100.0,261.2 1108.0,262.0C1116.0,262.8 1128.0,264.5 1132.0,265.0" fill="none" stroke="#c9991d" stroke-width="1.6" stroke-linejoin="round" stroke-linecap="round" />
<path d="M1080.0,297.0C1084.0,297.5 1096.2,299.0 1104.0,300.0C1111.8,301.0 1123.2,302.5 1127.0,303.0" fill="none" stroke="#c9991d" stroke-width="1.6" stroke-linejoin="round" stroke-linecap="round" />
<path d="M1074.0,328.0C1078.0,328.5 1090.2,330.0 1098.0,331.0C1105.8,332.0 1117.2,333.5 1121.0,334.0" fill="none" stroke="#c9991d" stroke-width="1.6" stroke-linejoin="round" stroke-linecap="round" />
<path d="M1112.0,195.0 L1110.0,260.0 L1104.0,300.0 L1098.0,340.0" fill="none" stroke="#171717" stroke-width="0.7" stroke-linejoin="round" stroke-linecap="round" />
<ellipse cx="1093" cy="212" rx="9" ry="4" transform="rotate(-38 1093 212)" fill="#3b1b3d" stroke="#777" stroke-width=".8"/>
<ellipse cx="1127" cy="212" rx="9" ry="4" transform="rotate(42 1127 212)" fill="#3b1b3d" stroke="#777" stroke-width=".8"/>
</g>
<path d="M1292.0,209.0C1295.0,208.5 1303.2,206.8 1310.0,206.0C1316.8,205.2 1329.2,204.3 1333.0,204.0C1332.0,206.7 1328.5,214.3 1327.0,220.0C1325.5,225.7 1325.0,230.7 1324.0,238.0C1323.0,245.3 1322.2,255.2 1321.0,264.0C1319.8,272.8 1318.8,281.0 1317.0,291.0C1315.2,301.0 1312.0,313.5 1310.0,324.0C1308.0,334.5 1305.8,349.0 1305.0,354.0C1304.3,354.7 1304.2,357.3 1301.0,358.0C1297.8,358.7 1291.5,359.2 1286.0,358.0C1280.5,356.8 1271.0,352.2 1268.0,351.0C1269.8,347.0 1275.7,335.5 1279.0,327.0C1282.3,318.5 1285.5,309.7 1288.0,300.0C1290.5,290.3 1292.3,279.8 1294.0,269.0C1295.7,258.2 1297.5,244.5 1298.0,235.0C1298.5,225.5 1298.0,216.3 1297.0,212.0C1296.0,207.7 1292.8,209.5 1292.0,209.0Z" fill="url(#gpillar)" />
<path d="M1292.0,209.0C1295.0,208.5 1303.2,206.8 1310.0,206.0C1316.8,205.2 1329.2,204.3 1333.0,204.0C1332.0,206.7 1328.5,214.3 1327.0,220.0C1325.5,225.7 1325.0,230.7 1324.0,238.0C1323.0,245.3 1322.2,255.2 1321.0,264.0C1319.8,272.8 1318.8,281.0 1317.0,291.0C1315.2,301.0 1312.0,313.5 1310.0,324.0C1308.0,334.5 1305.8,349.0 1305.0,354.0C1304.3,354.7 1304.2,357.3 1301.0,358.0C1297.8,358.7 1291.5,359.2 1286.0,358.0C1280.5,356.8 1271.0,352.2 1268.0,351.0C1269.8,347.0 1275.7,335.5 1279.0,327.0C1282.3,318.5 1285.5,309.7 1288.0,300.0C1290.5,290.3 1292.3,279.8 1294.0,269.0C1295.7,258.2 1297.5,244.5 1298.0,235.0C1298.5,225.5 1298.0,216.3 1297.0,212.0C1296.0,207.7 1292.8,209.5 1292.0,209.0Z" fill="url(#gpillarhi)" />
<clipPath id="cqw"><path d="M1328.0,220.0C1329.7,214.8 1330.7,210.5 1334.0,207.0C1337.3,203.5 1342.0,200.5 1348.0,199.0C1354.0,197.5 1363.3,197.5 1370.0,198.0C1376.7,198.5 1382.5,199.5 1388.0,202.0C1393.5,204.5 1399.2,209.3 1403.0,213.0C1406.8,216.7 1409.8,219.8 1411.0,224.0C1412.2,228.2 1411.3,232.7 1410.0,238.0C1408.7,243.3 1406.0,250.2 1403.0,256.0C1400.0,261.8 1396.8,266.3 1392.0,273.0C1387.2,279.7 1380.7,288.5 1374.0,296.0C1367.3,303.5 1359.7,311.0 1352.0,318.0C1344.3,325.0 1335.7,332.0 1328.0,338.0C1320.3,344.0 1309.7,351.3 1306.0,354.0C1306.7,349.0 1308.2,334.5 1310.0,324.0C1311.8,313.5 1315.2,301.0 1317.0,291.0C1318.8,281.0 1319.8,272.8 1321.0,264.0C1322.2,255.2 1322.8,245.3 1324.0,238.0C1325.2,230.7 1326.3,225.2 1328.0,220.0Z"/></clipPath>
<path d="M1328.0,220.0C1329.7,214.8 1330.7,210.5 1334.0,207.0C1337.3,203.5 1342.0,200.5 1348.0,199.0C1354.0,197.5 1363.3,197.5 1370.0,198.0C1376.7,198.5 1382.5,199.5 1388.0,202.0C1393.5,204.5 1399.2,209.3 1403.0,213.0C1406.8,216.7 1409.8,219.8 1411.0,224.0C1412.2,228.2 1411.3,232.7 1410.0,238.0C1408.7,243.3 1406.0,250.2 1403.0,256.0C1400.0,261.8 1396.8,266.3 1392.0,273.0C1387.2,279.7 1380.7,288.5 1374.0,296.0C1367.3,303.5 1359.7,311.0 1352.0,318.0C1344.3,325.0 1335.7,332.0 1328.0,338.0C1320.3,344.0 1309.7,351.3 1306.0,354.0C1306.7,349.0 1308.2,334.5 1310.0,324.0C1311.8,313.5 1315.2,301.0 1317.0,291.0C1318.8,281.0 1319.8,272.8 1321.0,264.0C1322.2,255.2 1322.8,245.3 1324.0,238.0C1325.2,230.7 1326.3,225.2 1328.0,220.0Z" fill="#2a0c28" stroke="#1d081e" stroke-width="0.9" stroke-linejoin="round" stroke-linecap="round" />
<g clip-path="url(#cqw)">
<path d="M1340.0,198.0 L1405.0,212.0 L1405.0,218.0 L1340.0,204.0Z" fill="#3e3e3e" />
<rect x="1370" y="198" width="10" height="54" fill="#4c4c4c"/>
<path d="M1353.0,249.0C1358.2,249.0 1378.8,249.0 1384.0,249.0C1384.3,251.8 1384.7,262.5 1386.0,266.0C1387.3,269.5 1391.7,267.5 1392.0,270.0C1392.3,272.5 1390.3,277.7 1388.0,281.0C1385.7,284.3 1379.7,288.5 1378.0,290.0C1371.7,290.3 1350.0,292.5 1340.0,292.0C1330.0,291.5 1321.7,291.0 1318.0,287.0C1314.3,283.0 1314.3,271.2 1318.0,268.0C1321.7,264.8 1334.3,269.0 1340.0,268.0C1345.7,267.0 1349.8,265.2 1352.0,262.0C1354.2,258.8 1352.8,251.2 1353.0,249.0Z" fill="#2f2f2f" stroke="#101010" stroke-width="0.6" stroke-linejoin="round" stroke-linecap="round" />
<circle cx="1359" cy="256" r="2.6" fill="#111" stroke="#666" stroke-width=".5"/>
<circle cx="1374" cy="257" r="2.6" fill="#111" stroke="#666" stroke-width=".5"/>
<circle cx="1338" cy="281" r="2.6" fill="#111" stroke="#666" stroke-width=".5"/>
<circle cx="1346" cy="279" r="2.6" fill="#111" stroke="#666" stroke-width=".5"/>
<circle cx="1354" cy="278" r="2.6" fill="#111" stroke="#666" stroke-width=".5"/>
<circle cx="1362" cy="277" r="2.6" fill="#111" stroke="#666" stroke-width=".5"/>
<circle cx="1370" cy="276" r="2.6" fill="#111" stroke="#666" stroke-width=".5"/>
<circle cx="1380" cy="275" r="2.6" fill="#111" stroke="#666" stroke-width=".5"/>
<rect x="1338" y="291" width="28" height="13" rx="2" fill="#1d1d1d" transform="rotate(-8 1352 297)"/>
<path d="M1316.0,311.0 L1358.0,309.0" fill="none" stroke="#777" stroke-width="3.4" stroke-linejoin="round" stroke-linecap="round" />
<path d="M1304.0,337.0 L1320.0,341.0 L1316.0,347.0 L1302.0,345.0Z" fill="#c12222" />
</g>
<ellipse cx="679.3" cy="434.5" rx="13.2" ry="6.2" fill="#1c0a1c" transform="rotate(-14 677.3 436.5)"/>
<path d="M655.6,353.5C659.0,353.5 672.6,353.5 676.0,353.5C677.9,366.5 685.4,418.5 687.3,431.5C686.8,432.5 686.0,436.1 684.3,437.5C682.6,438.9 679.8,439.8 677.3,440.0C674.8,440.2 671.0,439.6 669.3,439.0C667.6,438.4 667.6,436.9 667.3,436.5C665.3,422.7 657.5,367.3 655.6,353.5Z" fill="url(#gpost)" stroke="#262626" stroke-width="0.6" stroke-linejoin="round" stroke-linecap="round" />
<rect x="655.3" y="347.9" width="21.0" height="9" rx="4" fill="url(#gpost)" stroke="#2b2b2b" stroke-width=".6"/>
<ellipse cx="665.8" cy="350.9" rx="9.0" ry="2.9" fill="#a6aaa6" stroke="#4a4a4a" stroke-width=".5"/>
<ellipse cx="666.3" cy="350.6" rx="6.199999999999999" ry="1.7" fill="#7e827e"/>
<circle cx="673.0" cy="362.5" r="1.8" fill="#262826" stroke="#8a8e8a" stroke-width=".5"/>
<circle cx="674.1" cy="369.7" r="1.8" fill="#262826" stroke="#8a8e8a" stroke-width=".5"/>
<circle cx="675.2" cy="377.0" r="1.8" fill="#262826" stroke="#8a8e8a" stroke-width=".5"/>
<circle cx="676.3" cy="384.2" r="1.8" fill="#262826" stroke="#8a8e8a" stroke-width=".5"/>
<circle cx="677.4" cy="391.5" r="1.8" fill="#262826" stroke="#8a8e8a" stroke-width=".5"/>
<circle cx="678.6" cy="398.7" r="1.8" fill="#262826" stroke="#8a8e8a" stroke-width=".5"/>
<circle cx="679.7" cy="406.0" r="1.8" fill="#262826" stroke="#8a8e8a" stroke-width=".5"/>
<circle cx="680.8" cy="413.2" r="1.8" fill="#262826" stroke="#8a8e8a" stroke-width=".5"/>
<circle cx="681.9" cy="420.5" r="1.8" fill="#262826" stroke="#8a8e8a" stroke-width=".5"/>
<circle cx="683.0" cy="427.7" r="1.8" fill="#262826" stroke="#8a8e8a" stroke-width=".5"/>
<ellipse cx="908.8" cy="503" rx="14.899999999999999" ry="6.2" fill="#1c0a1c" transform="rotate(-14 906.8 505)"/>
<path d="M889.6,406.5C893.4,406.5 908.6,406.5 912.4,406.5C913.4,422.1 917.5,484.4 918.5,500.0C918.0,501.0 917.5,504.6 915.5,506.0C913.5,507.4 909.9,508.2 906.8,508.5C903.7,508.8 899.0,508.1 897.1,507.5C895.1,506.9 895.4,505.4 895.1,505.0C894.2,488.6 890.5,422.9 889.6,406.5Z" fill="url(#gpost)" stroke="#262626" stroke-width="0.6" stroke-linejoin="round" stroke-linecap="round" />
<rect x="889.3000000000001" y="400.9" width="23.400000000000002" height="9" rx="4" fill="url(#gpost)" stroke="#2b2b2b" stroke-width=".6"/>
<ellipse cx="901" cy="403.9" rx="10.200000000000001" ry="2.9" fill="#a6aaa6" stroke="#4a4a4a" stroke-width=".5"/>
<ellipse cx="901.5" cy="403.6" rx="7.4" ry="1.7" fill="#7e827e"/>
<circle cx="909.7" cy="418.2" r="1.8" fill="#262826" stroke="#8a8e8a" stroke-width=".5"/>
<circle cx="910.2" cy="427.4" r="1.8" fill="#262826" stroke="#8a8e8a" stroke-width=".5"/>
<circle cx="910.7" cy="436.6" r="1.8" fill="#262826" stroke="#8a8e8a" stroke-width=".5"/>
<circle cx="911.1" cy="445.9" r="1.8" fill="#262826" stroke="#8a8e8a" stroke-width=".5"/>
<circle cx="911.6" cy="455.1" r="1.8" fill="#262826" stroke="#8a8e8a" stroke-width=".5"/>
<circle cx="912.1" cy="464.3" r="1.8" fill="#262826" stroke="#8a8e8a" stroke-width=".5"/>
<circle cx="912.6" cy="473.5" r="1.8" fill="#262826" stroke="#8a8e8a" stroke-width=".5"/>
<circle cx="913.0" cy="482.8" r="1.8" fill="#262826" stroke="#8a8e8a" stroke-width=".5"/>
<circle cx="913.5" cy="492.0" r="1.8" fill="#262826" stroke="#8a8e8a" stroke-width=".5"/>
<circle cx="914.0" cy="501.2" r="1.8" fill="#262826" stroke="#8a8e8a" stroke-width=".5"/>
<path d="M816.0,604.0C820.4,601.8 832.9,595.7 842.6,591.0C852.3,586.3 861.8,580.8 874.0,575.6C886.2,570.4 903.4,564.8 915.6,560.0C927.8,555.2 929.6,553.2 947.0,547.0C964.4,540.8 998.5,528.8 1020.0,523.0C1041.5,517.2 1064.0,514.2 1076.2,512.0C1088.4,509.8 1087.1,509.2 1093.0,510.0C1098.9,510.8 1107.5,512.1 1111.7,517.0C1116.0,521.9 1117.6,532.4 1118.5,539.6C1119.4,546.8 1119.4,551.4 1117.0,560.0C1114.6,568.6 1111.5,582.8 1104.0,591.0C1096.5,599.2 1084.5,605.5 1072.0,609.5C1059.5,613.5 1046.3,613.8 1029.0,615.0C1011.7,616.2 986.9,617.2 968.0,617.0C949.1,616.8 933.1,615.0 915.6,614.0C898.1,613.0 879.6,612.7 863.0,611.0C846.4,609.3 823.8,605.2 816.0,604.0Z" fill="#571a53" stroke="#1d081e" stroke-width="0.9" stroke-linejoin="round" stroke-linecap="round" />
<path d="M821.0,603.6 L845.0,598.5 L869.0,594.0" fill="none" stroke="#a858b0" stroke-width="1.8" stroke-linejoin="round" stroke-linecap="round" opacity=".85"/>
<clipPath id="chl"><path d="M872.0,593.0C879.3,589.0 898.9,576.7 915.6,569.0C932.3,561.3 953.4,553.5 972.3,547.0C991.2,540.5 1011.7,534.6 1029.0,530.0C1046.3,525.4 1064.5,521.4 1076.2,519.5C1087.9,517.6 1093.7,517.4 1099.0,518.5C1104.3,519.6 1106.2,522.0 1108.0,526.0C1109.8,530.0 1110.2,536.1 1109.5,542.3C1108.8,548.5 1107.1,556.2 1104.0,563.0C1100.9,569.8 1096.7,577.1 1091.0,582.8C1085.3,588.5 1080.3,593.4 1070.0,597.0C1059.7,600.6 1045.3,603.4 1029.0,604.5C1012.7,605.6 991.2,604.8 972.3,603.5C953.4,602.2 932.3,598.8 915.6,597.0C898.9,595.2 879.3,593.7 872.0,593.0Z"/></clipPath>
<path d="M872.0,593.0C879.3,589.0 898.9,576.7 915.6,569.0C932.3,561.3 953.4,553.5 972.3,547.0C991.2,540.5 1011.7,534.6 1029.0,530.0C1046.3,525.4 1064.5,521.4 1076.2,519.5C1087.9,517.6 1093.7,517.4 1099.0,518.5C1104.3,519.6 1106.2,522.0 1108.0,526.0C1109.8,530.0 1110.2,536.1 1109.5,542.3C1108.8,548.5 1107.1,556.2 1104.0,563.0C1100.9,569.8 1096.7,577.1 1091.0,582.8C1085.3,588.5 1080.3,593.4 1070.0,597.0C1059.7,600.6 1045.3,603.4 1029.0,604.5C1012.7,605.6 991.2,604.8 972.3,603.5C953.4,602.2 932.3,598.8 915.6,597.0C898.9,595.2 879.3,593.7 872.0,593.0Z" fill="#3c4448" stroke="#1a0a1a" stroke-width="0.8" stroke-linejoin="round" stroke-linecap="round" />
<g clip-path="url(#chl)">
<path d="M868.0,575.0 L940.0,555.0 L940.0,612.0 L868.0,612.0Z" fill="#4a4f48" />
<path d="M905.0,560.0 L925.0,556.0 L925.0,600.0 L905.0,600.0Z" fill="#3e423e" />
<path d="M1086.0,510.0 L1122.0,510.0 L1122.0,600.0 L1082.0,600.0 L1092.0,560.0Z" fill="#141414" />
<path d="M1066.0,517.0 L1090.0,514.0 L1086.0,560.0 L1076.0,600.0 L1062.0,600.0Z" fill="#55636c" stroke="#1c1c1c" stroke-width="0.6" stroke-linejoin="round" stroke-linecap="round" />
<path d="M1072.0,530.0 L1084.0,528.0 L1080.0,585.0 L1070.0,590.0Z" fill="#3f4a52" />
<path d="M1030.0,524.0 L1070.0,516.0 L1068.0,552.0 L1036.0,556.0Z" fill="#4c4c46" />
<path d="M1046.0,530.0C1047.0,526.3 1051.3,524.3 1054.0,524.0C1056.7,523.7 1061.0,524.7 1062.0,528.0C1063.0,531.3 1062.3,541.0 1060.0,544.0C1057.7,547.0 1050.3,548.3 1048.0,546.0C1045.7,543.7 1045.0,533.7 1046.0,530.0Z" fill="#6a6a6a" stroke="#222" stroke-width="0.5" stroke-linejoin="round" stroke-linecap="round" />
<path d="M925.0,562.0C926.8,554.8 932.5,556.2 938.0,554.0C943.5,551.8 952.3,549.3 958.0,549.0C963.7,548.7 969.2,548.2 972.0,552.0C974.8,555.8 975.7,564.5 975.0,572.0C974.3,579.5 976.0,592.8 968.0,597.0C960.0,601.2 934.2,602.8 927.0,597.0C919.8,591.2 923.2,569.2 925.0,562.0Z" fill="#26335f" stroke="#0e1530" stroke-width="0.6" stroke-linejoin="round" stroke-linecap="round" />
<path d="M930.0,560.0C930.7,557.2 939.7,554.3 944.0,553.0C948.3,551.7 953.7,550.0 956.0,552.0C958.3,554.0 960.7,562.0 958.0,565.0C955.3,568.0 944.7,570.8 940.0,570.0C935.3,569.2 929.3,562.8 930.0,560.0Z" fill="#2e3d72" stroke="#0e1530" stroke-width="0.5" stroke-linejoin="round" stroke-linecap="round" />
<path d="M940.0,600.0 L960.0,585.0 L990.0,578.0 L1010.0,577.0 L1040.0,590.0 L1072.0,590.0 L1072.0,612.0 L940.0,612.0Z" fill="#55646e" stroke="#1c1c1c" stroke-width="0.5" stroke-linejoin="round" stroke-linecap="round" />
<path d="M960.0,590.0 L992.0,582.0 L1020.0,588.0 L1010.0,600.0 L970.0,602.0Z" fill="#46545e" stroke="#1c1c1c" stroke-width="0.4" stroke-linejoin="round" stroke-linecap="round" />
<path d="M1038.0,551.0 L1066.0,556.0 L1064.0,566.0 L1036.0,562.0Z" fill="#b22a22" />
<path d="M984.0,547.0 L1026.0,536.0 L1030.0,548.0 L990.0,560.0Z" fill="#7e7e48" />
<ellipse cx="1006.0" cy="548.0" rx="21.0" ry="5.4" transform="rotate(-15 1006.0 549.0)" fill="#1c1c1c" stroke="#8a8a40" stroke-width="1" stroke-dasharray="1 1.2"/>
<ellipse cx="1009.6" cy="556.0" rx="21.7" ry="5.4" transform="rotate(-15 1009.6 557.0)" fill="#1c1c1c" stroke="#8a8a40" stroke-width="1" stroke-dasharray="1 1.2"/>
<ellipse cx="1013.2" cy="564.0" rx="22.4" ry="5.4" transform="rotate(-15 1013.2 565.0)" fill="#1c1c1c" stroke="#8a8a40" stroke-width="1" stroke-dasharray="1 1.2"/>
<ellipse cx="1016.8" cy="572.0" rx="23.1" ry="5.4" transform="rotate(-15 1016.8 573.0)" fill="#1c1c1c" stroke="#8a8a40" stroke-width="1" stroke-dasharray="1 1.2"/>
<ellipse cx="1020.4" cy="580.0" rx="23.8" ry="5.4" transform="rotate(-15 1020.4 581.0)" fill="#1c1c1c" stroke="#8a8a40" stroke-width="1" stroke-dasharray="1 1.2"/>
<ellipse cx="1024.0" cy="588.0" rx="24.5" ry="5.4" transform="rotate(-15 1024.0 589.0)" fill="#1c1c1c" stroke="#8a8a40" stroke-width="1" stroke-dasharray="1 1.2"/>
<ellipse cx="1027.6" cy="596.0" rx="25.2" ry="5.4" transform="rotate(-15 1027.6 597.0)" fill="#1c1c1c" stroke="#8a8a40" stroke-width="1" stroke-dasharray="1 1.2"/>
<g transform="rotate(-15 1006.0 547.0)"><path d="M982.0,547.0 a24.0,7.5 0 0 0 48.0,0" fill="none" stroke="#6e1a7c" stroke-width="4.6" stroke-linecap="round"/><path d="M982.0,547.0 a24.0,7.5 0 0 0 48.0,0" fill="none" stroke="#b93cc9" stroke-width="3.2" stroke-linecap="round"/></g>
<g transform="rotate(-15 1009.6 555.0)"><path d="M984.8,555.0 a24.8,7.5 0 0 0 49.6,0" fill="none" stroke="#6e1a7c" stroke-width="4.6" stroke-linecap="round"/><path d="M984.8,555.0 a24.8,7.5 0 0 0 49.6,0" fill="none" stroke="#b93cc9" stroke-width="3.2" stroke-linecap="round"/></g>
<g transform="rotate(-15 1013.2 563.0)"><path d="M987.6,563.0 a25.6,7.5 0 0 0 51.2,0" fill="none" stroke="#6e1a7c" stroke-width="4.6" stroke-linecap="round"/><path d="M987.6,563.0 a25.6,7.5 0 0 0 51.2,0" fill="none" stroke="#b93cc9" stroke-width="3.2" stroke-linecap="round"/></g>
<g transform="rotate(-15 1016.8 571.0)"><path d="M990.4,571.0 a26.4,7.5 0 0 0 52.8,0" fill="none" stroke="#6e1a7c" stroke-width="4.6" stroke-linecap="round"/><path d="M990.4,571.0 a26.4,7.5 0 0 0 52.8,0" fill="none" stroke="#b93cc9" stroke-width="3.2" stroke-linecap="round"/></g>
<g transform="rotate(-15 1020.4 579.0)"><path d="M993.2,579.0 a27.2,7.5 0 0 0 54.4,0" fill="none" stroke="#6e1a7c" stroke-width="4.6" stroke-linecap="round"/><path d="M993.2,579.0 a27.2,7.5 0 0 0 54.4,0" fill="none" stroke="#b93cc9" stroke-width="3.2" stroke-linecap="round"/></g>
<g transform="rotate(-15 1024.0 587.0)"><path d="M996.0,587.0 a28.0,7.5 0 0 0 56.0,0" fill="none" stroke="#6e1a7c" stroke-width="4.6" stroke-linecap="round"/><path d="M996.0,587.0 a28.0,7.5 0 0 0 56.0,0" fill="none" stroke="#b93cc9" stroke-width="3.2" stroke-linecap="round"/></g>
<g transform="rotate(-15 1027.6 595.0)"><path d="M998.8,595.0 a28.8,7.5 0 0 0 57.6,0" fill="none" stroke="#6e1a7c" stroke-width="4.6" stroke-linecap="round"/><path d="M998.8,595.0 a28.8,7.5 0 0 0 57.6,0" fill="none" stroke="#b93cc9" stroke-width="3.2" stroke-linecap="round"/></g>
</g>
<path d="M627.6,573.2C632.6,576.2 648.7,586.5 657.8,591.0C666.9,595.5 672.4,596.5 682.0,600.0C691.6,603.5 702.6,607.4 715.6,612.2C728.6,617.0 745.9,623.3 760.0,628.9C774.1,634.5 788.2,642.1 800.0,646.0C811.8,649.9 822.7,650.2 831.0,652.5C839.3,654.8 843.3,655.6 849.8,660.0C856.3,664.4 863.8,672.7 870.0,679.0C876.2,685.3 882.1,692.4 887.0,697.6C891.9,702.8 897.5,707.9 899.6,710.0C898.8,711.0 895.8,715.2 895.0,716.3C894.2,717.1 891.1,720.2 890.3,721.0C883.0,718.1 861.8,709.5 846.7,703.8C831.7,698.1 814.5,692.3 800.0,686.7C785.5,681.1 775.0,676.3 760.0,670.0C745.0,663.7 726.7,657.0 710.0,649.0C693.3,641.0 673.2,629.0 660.0,622.0C646.8,615.0 635.8,609.5 631.0,607.0C630.4,601.4 628.2,578.8 627.6,573.2Z" fill="#ffffff" stroke="#1d081e" stroke-width="0.8" stroke-linejoin="round" stroke-linecap="round" />
<path d="M661.0,592.5C664.5,593.8 672.9,596.7 682.0,600.0C691.1,603.3 702.6,607.4 715.6,612.2C728.6,617.0 745.9,623.3 760.0,628.9C774.1,634.5 788.2,642.1 800.0,646.0C811.8,649.9 822.7,650.2 831.0,652.5C839.3,654.8 843.3,655.6 849.8,660.0C856.3,664.4 863.8,672.7 870.0,679.0C876.2,685.3 882.1,692.4 887.0,697.6C891.9,702.8 897.5,707.9 899.6,710.0C899.1,710.8 900.1,716.0 896.5,714.7C892.9,713.4 885.8,707.0 877.8,702.3C869.8,697.6 861.2,691.5 848.2,686.7C835.2,681.9 814.7,678.9 800.0,673.5C785.3,668.1 771.5,660.3 760.0,654.4C748.5,648.5 742.1,642.7 731.0,638.3C719.9,633.9 705.1,631.0 693.3,627.8C681.5,624.6 667.5,622.6 660.0,618.9C652.5,615.1 650.2,607.6 648.3,605.3C650.4,603.2 658.9,594.6 661.0,592.5Z" fill="#484848" stroke="#1c1c1c" stroke-width="0.6" stroke-linejoin="round" stroke-linecap="round" />
<path d="M661.0,592.5C664.5,593.8 672.9,596.7 682.0,600.0C691.1,603.3 702.6,607.4 715.6,612.2C728.6,617.0 745.9,623.3 760.0,628.9C774.1,634.5 788.2,642.1 800.0,646.0C811.8,649.9 822.7,650.2 831.0,652.5C839.3,654.8 843.3,655.6 849.8,660.0C856.3,664.4 863.8,672.7 870.0,679.0C876.2,685.3 882.1,692.4 887.0,697.6C891.9,702.8 897.5,707.9 899.6,710.0C896.0,707.2 886.4,698.2 877.8,693.0C869.2,687.8 861.0,683.7 848.0,679.0C835.0,674.3 814.7,670.4 800.0,665.0C785.3,659.6 771.5,652.4 760.0,646.7C748.5,641.0 742.1,635.5 731.0,631.0C719.9,626.5 705.1,623.5 693.3,620.0C681.5,616.5 667.5,613.3 660.0,610.0C652.5,606.7 650.2,601.7 648.3,600.0C649.2,599.0 651.9,595.2 654.0,594.0C656.1,592.8 659.8,592.8 661.0,592.5Z" fill="#808080" stroke="#1c1c1c" stroke-width="0.6" stroke-linejoin="round" stroke-linecap="round" />
<ellipse cx="692" cy="606" rx="7" ry="3" fill="#5e5e5e" stroke="#222" stroke-width=".6"/>
<path d="M733.0,631.5 L733.0,639.0" fill="none" stroke="#222" stroke-width="0.6" stroke-linejoin="round" stroke-linecap="round" />
<path d="M782.0,657.0 L782.0,665.5" fill="none" stroke="#222" stroke-width="0.6" stroke-linejoin="round" stroke-linecap="round" />
<path d="M850.0,680.0 L850.0,687.5" fill="none" stroke="#222" stroke-width="0.6" stroke-linejoin="round" stroke-linecap="round" />
<path d="M594.0,588.0 L608.0,584.5 L613.0,620.0 L614.0,636.0 L593.0,638.0 L584.0,631.0 L590.0,610.0Z" fill="#65215f" stroke="#1d081e" stroke-width="0.5" stroke-linejoin="round" stroke-linecap="round" />
<path d="M608.0,584.5 L626.5,576.0 L631.5,604.5 L617.0,618.0 L614.0,636.0 L612.0,618.0Z" fill="url(#gflap)" stroke="#1d081e" stroke-width="0.6" stroke-linejoin="round" stroke-linecap="round" />
<path d="M599.0,462.0C599.8,463.3 602.0,467.0 604.0,470.0C606.0,473.0 609.3,476.3 611.0,480.0C612.7,483.7 613.5,490.0 614.0,492.0C612.7,492.8 608.3,499.0 606.0,497.0C603.7,495.0 601.2,485.8 600.0,480.0C598.8,474.2 599.2,465.0 599.0,462.0Z" fill="#28092a" />
<g clip-path="url(#cbody)">
<path d="M656.0,370.0C655.2,372.3 652.2,379.0 651.0,384.0C649.8,389.0 651.1,393.8 649.0,400.0C646.9,406.2 641.8,412.2 638.6,421.0C635.4,429.8 631.8,444.2 630.0,453.0C628.2,461.8 628.0,468.0 628.0,474.0C628.0,480.0 627.9,484.0 630.0,489.0C632.1,494.0 634.7,498.3 640.7,504.0C646.7,509.7 654.7,516.2 666.0,523.0C677.3,529.8 694.5,538.8 708.7,544.5C722.9,550.2 736.8,553.8 751.0,557.0C765.2,560.2 779.5,562.9 793.7,563.6C807.9,564.4 823.6,563.3 836.0,561.5C848.4,559.7 857.3,556.2 868.0,553.0C878.7,549.8 883.0,547.5 900.0,542.0C917.0,536.5 943.7,529.2 970.0,520.0C996.3,510.8 1038.2,495.7 1058.0,487.0C1077.8,478.3 1075.7,475.5 1088.6,467.7C1101.5,459.9 1118.5,451.0 1135.5,440.0C1152.5,429.0 1172.2,414.9 1190.6,401.6C1209.0,388.3 1236.5,367.2 1245.7,360.3" fill="none" stroke="#1d081e" stroke-width="1.15" stroke-linejoin="round" stroke-linecap="round" />
<path d="M579.0,485.0C580.8,487.8 586.1,496.3 590.0,502.0C593.9,507.7 598.3,513.3 602.5,519.0C606.7,524.7 607.9,530.3 615.0,536.0C622.1,541.7 632.9,547.3 645.0,553.0C657.1,558.7 673.3,565.0 687.5,570.0C701.7,575.0 715.8,579.2 730.0,582.7C744.2,586.2 758.2,587.5 772.5,591.0C786.8,594.5 808.8,601.8 816.0,604.0" fill="none" stroke="#1d081e" stroke-width="1.15" stroke-linejoin="round" stroke-linecap="round" />
<path d="M628.0,484.0C624.3,486.3 609.4,495.4 605.7,497.7" fill="none" stroke="#1d081e" stroke-width="1.15" stroke-linejoin="round" stroke-linecap="round" />
<path d="M632.0,508.0C629.5,511.6 619.7,523.5 617.0,529.6C614.3,535.7 616.2,542.0 616.0,544.5" fill="none" stroke="#1d081e" stroke-width="1.15" stroke-linejoin="round" stroke-linecap="round" />
<path d="M848.0,559.0C848.5,562.2 850.5,575.2 851.0,578.5" fill="none" stroke="#1d081e" stroke-width="1.15" stroke-linejoin="round" stroke-linecap="round" />
<path d="M798.0,568.0C795.8,571.8 787.2,587.2 785.0,591.0" fill="none" stroke="#1d081e" stroke-width="1.15" stroke-linejoin="round" stroke-linecap="round" />
<path d="M1058.0,487.0C1059.4,491.1 1065.2,507.7 1066.6,511.8" fill="none" stroke="#1d081e" stroke-width="1.15" stroke-linejoin="round" stroke-linecap="round" />
<path d="M1105.0,462.0C1112.3,457.9 1132.5,447.9 1149.0,437.4C1165.5,426.9 1185.6,412.3 1204.0,399.0C1222.4,385.7 1250.2,364.4 1259.4,357.5" fill="none" stroke="#1d081e" stroke-width="1.15" stroke-linejoin="round" stroke-linecap="round" />
<path d="M1108.0,509.0C1112.6,504.8 1124.0,492.2 1135.5,484.0C1147.0,475.8 1163.0,468.2 1176.8,459.5C1190.5,450.8 1205.6,441.2 1218.0,432.0C1230.4,422.8 1237.3,415.4 1251.0,404.4C1264.7,393.4 1285.2,377.6 1300.0,366.0C1314.8,354.4 1333.3,340.2 1340.0,335.0" fill="none" stroke="#1d081e" stroke-width="1.15" stroke-linejoin="round" stroke-linecap="round" />
<path d="M1105.0,462.0C1112.3,467.1 1141.7,487.4 1149.0,492.5" fill="none" stroke="#1d081e" stroke-width="1.15" stroke-linejoin="round" stroke-linecap="round" />
<path d="M1179.6,434.7C1184.2,437.4 1202.4,448.3 1207.0,451.0" fill="none" stroke="#1d081e" stroke-width="1.15" stroke-linejoin="round" stroke-linecap="round" />
<path d="M1207.0,451.0C1209.8,448.7 1217.1,439.2 1223.6,437.4C1230.0,435.6 1238.3,436.3 1245.7,440.0C1253.1,443.7 1261.3,450.3 1267.7,459.5C1274.1,468.7 1280.3,482.1 1284.0,495.0C1287.7,507.9 1289.8,522.4 1289.8,536.6C1289.8,550.8 1285.0,572.8 1284.0,580.0" fill="none" stroke="#1d081e" stroke-width="1.15" stroke-linejoin="round" stroke-linecap="round" />
<path d="M1212.0,470.0C1214.7,468.7 1222.3,462.7 1228.0,462.0C1233.7,461.3 1240.3,462.3 1246.0,466.0C1251.7,469.7 1257.7,475.8 1262.0,484.0C1266.3,492.2 1270.0,502.3 1272.0,515.0C1274.0,527.7 1274.7,545.8 1274.0,560.0C1273.3,574.2 1269.0,593.3 1268.0,600.0" fill="none" stroke="#1d081e" stroke-width="1.15" stroke-linejoin="round" stroke-linecap="round" />
<path d="M816.0,604.0C820.0,608.7 834.2,624.0 840.0,632.0C845.8,640.0 849.2,648.7 851.0,652.0" fill="none" stroke="#1d081e" stroke-width="1.15" stroke-linejoin="round" stroke-linecap="round" />
<path d="M851.0,652.0C855.8,659.0 871.5,683.3 880.0,694.0C888.5,704.7 892.0,711.3 902.0,716.0C912.0,720.7 926.2,723.8 940.0,722.0C953.8,720.2 970.0,713.3 985.0,705.0C1000.0,696.7 1015.8,684.2 1030.0,672.0C1044.2,659.8 1057.7,645.5 1070.0,632.0C1082.3,618.5 1098.3,597.8 1104.0,591.0" fill="none" stroke="#1d081e" stroke-width="1.15" stroke-linejoin="round" stroke-linecap="round" />
<path d="M870.0,679.0C874.2,683.8 888.0,699.8 895.0,708.0C902.0,716.2 902.8,723.8 912.0,728.0C921.2,732.2 936.2,735.0 950.0,733.0C963.8,731.0 980.0,724.5 995.0,716.0C1010.0,707.5 1025.5,694.7 1040.0,682.0C1054.5,669.3 1070.0,654.3 1082.0,640.0C1094.0,625.7 1107.0,603.3 1112.0,596.0" fill="none" stroke="#1d081e" stroke-width="1.15" stroke-linejoin="round" stroke-linecap="round" />
<path d="M902.0,716.0C898.3,720.0 887.2,731.3 880.0,740.0C872.8,748.7 862.5,763.3 859.0,768.0" fill="none" stroke="#1d081e" stroke-width="1.15" stroke-linejoin="round" stroke-linecap="round" />
<path d="M912.0,728.0C908.3,731.3 897.7,740.8 890.0,748.0C882.3,755.2 870.0,767.2 866.0,771.0" fill="none" stroke="#1d081e" stroke-width="1.15" stroke-linejoin="round" stroke-linecap="round" />
<path d="M1215.0,489.0C1212.5,492.7 1205.2,502.8 1200.0,511.0C1194.8,519.2 1189.0,529.3 1184.0,538.0C1179.0,546.7 1174.0,555.3 1170.0,563.0C1166.0,570.7 1163.3,576.0 1160.0,584.0C1156.7,592.0 1153.0,601.7 1150.0,611.0C1147.0,620.3 1144.3,630.5 1142.0,640.0C1139.7,649.5 1137.7,659.3 1136.0,668.0C1134.3,676.7 1133.7,683.0 1132.0,692.0C1130.3,701.0 1127.0,717.0 1126.0,722.0" fill="none" stroke="#1d081e" stroke-width="0.9" stroke-linejoin="round" stroke-linecap="round" />
<path d="M585.0,522.0C586.8,525.0 592.5,533.7 596.0,540.0C599.5,546.3 603.8,552.7 606.0,560.0C608.2,567.3 608.5,580.0 609.0,584.0" fill="none" stroke="#1d081e" stroke-width="0.9" stroke-linejoin="round" stroke-linecap="round" />
<path d="M589.0,542.0C590.8,543.7 595.5,551.5 600.0,552.0C604.5,552.5 613.3,546.2 616.0,545.0" fill="none" stroke="#1d081e" stroke-width="0.9" stroke-linejoin="round" stroke-linecap="round" />
<path d="M594.0,588.0C593.3,591.7 591.7,602.8 590.0,610.0C588.3,617.2 585.0,627.5 584.0,631.0" fill="none" stroke="#1d081e" stroke-width="0.8" stroke-linejoin="round" stroke-linecap="round" />
<path d="M618.0,632.0C621.7,635.8 632.2,648.2 640.0,655.0C647.8,661.8 655.0,667.0 665.0,673.0C675.0,679.0 687.5,685.2 700.0,691.0C712.5,696.8 723.3,701.7 740.0,708.0C756.7,714.3 781.7,723.2 800.0,729.0C818.3,734.8 841.7,740.7 850.0,743.0" fill="none" stroke="#1d081e" stroke-width="0.6" stroke-linejoin="round" stroke-linecap="round" />
<path d="M1255.0,600.0C1262.5,591.3 1284.2,565.7 1300.0,548.0C1315.8,530.3 1333.3,512.0 1350.0,494.0C1366.7,476.0 1388.7,452.3 1400.0,440.0C1411.3,427.7 1415.0,423.3 1418.0,420.0" fill="none" stroke="#1d081e" stroke-width="1.15" stroke-linejoin="round" stroke-linecap="round" />
<path d="M1262.0,585.0C1268.3,577.5 1285.3,556.5 1300.0,540.0C1314.7,523.5 1333.3,504.0 1350.0,486.0C1366.7,468.0 1388.3,444.7 1400.0,432.0C1411.7,419.3 1416.7,413.7 1420.0,410.0" fill="none" stroke="#1d081e" stroke-width="1.15" stroke-linejoin="round" stroke-linecap="round" />
<path d="M1411.0,237.0C1413.3,241.2 1420.2,253.2 1425.0,262.0C1429.8,270.8 1434.5,283.7 1440.0,290.0C1445.5,296.3 1455.0,298.3 1458.0,300.0" fill="none" stroke="#1d081e" stroke-width="1.15" stroke-linejoin="round" stroke-linecap="round" />
<path d="M1403.0,256.0C1404.5,263.3 1411.2,286.0 1412.0,300.0C1412.8,314.0 1410.3,323.3 1408.0,340.0C1405.7,356.7 1401.8,381.7 1398.0,400.0C1394.2,418.3 1387.2,441.7 1385.0,450.0" fill="none" stroke="#1d081e" stroke-width="1.15" stroke-linejoin="round" stroke-linecap="round" />
<path d="M1392.0,273.0C1393.0,280.8 1398.0,303.8 1398.0,320.0C1398.0,336.2 1395.3,351.7 1392.0,370.0C1388.7,388.3 1383.0,411.7 1378.0,430.0C1373.0,448.3 1364.7,471.7 1362.0,480.0" fill="none" stroke="#1d081e" stroke-width="1.15" stroke-linejoin="round" stroke-linecap="round" />
<path d="M1412.0,300.0C1415.3,300.8 1428.7,304.2 1432.0,305.0" fill="none" stroke="#1d081e" stroke-width="1.15" stroke-linejoin="round" stroke-linecap="round" />
<path d="M1120.0,156.0C1115.8,158.3 1101.3,164.2 1095.0,170.0C1088.7,175.8 1084.2,187.5 1082.0,191.0" fill="none" stroke="#1d081e" stroke-width="1.15" stroke-linejoin="round" stroke-linecap="round" />
<path d="M1140.0,158.0C1135.3,161.0 1118.7,170.3 1112.0,176.0C1105.3,181.7 1102.0,189.3 1100.0,192.0" fill="none" stroke="#1d081e" stroke-width="1.15" stroke-linejoin="round" stroke-linecap="round" />
<path d="M1280.0,165.0C1274.2,167.2 1254.2,171.8 1245.0,178.0C1235.8,184.2 1228.3,198.0 1225.0,202.0" fill="none" stroke="#1d081e" stroke-width="1.15" stroke-linejoin="round" stroke-linecap="round" />
<path d="M1300.0,168.0C1293.7,170.7 1271.3,178.0 1262.0,184.0C1252.7,190.0 1247.0,200.7 1244.0,204.0" fill="none" stroke="#1d081e" stroke-width="1.15" stroke-linejoin="round" stroke-linecap="round" />
<path d="M1402.0,207.0C1395.0,205.2 1371.5,196.5 1360.0,196.0C1348.5,195.5 1337.5,202.7 1333.0,204.0" fill="none" stroke="#1d081e" stroke-width="1.15" stroke-linejoin="round" stroke-linecap="round" />
</g>
</svg>

<svg class="abs" style="left:0px;top:0px" width="1600" height="900" viewBox="0 0 1600 900">
<g fill="#dfe7ef">
<path d="M1525,76.5 L1530.5,84.5 H1519.5Z"/>
<path d="M1525,199.5 L1530.5,191.5 H1519.5Z"/>
<path d="M1463,137.5 L1471,132 V143Z"/>
<path d="M1587,137.5 L1579,132 V143Z"/>
</g>
<g fill="none" stroke="#dfe7ef" stroke-width="5.5">
<path d="M1506,85.5 C1497,88 1489,94 1485,101"/>
<path d="M1544,85.5 C1553,88 1561,94 1565,101"/>
</g>
<g fill="#dfe7ef"><path d="M1480,96 L1489.5,100 L1482,105.5Z"/><path d="M1570,96 L1560.5,100 L1568,105.5Z"/></g>
<g stroke="#d5dfe9" stroke-width="1.2" stroke-linejoin="round">
<path d="M1525,105.5 L1558,121 L1532.5,130 L1492,121.5Z" fill="#e9eff5"/>
<path d="M1492,121.5 L1532.5,130 V173.5 L1492.5,158.5Z" fill="#e6edf4"/>
<path d="M1532.5,130 L1558,121 V158.5 L1532.5,173.5Z" fill="#e1e9f1"/>
</g>
<path d="M1526,109 L1552,121.2 L1532.5,127.4 L1499.6,121.2Z" fill="#fff"/>
<path d="M1497,126.2 L1528.6,132.6 V167.6 L1497,155.8Z" fill="#fff" stroke="#fff" stroke-width="3" stroke-linejoin="round"/>
<path d="M1537.6,132.2 L1554.6,126 V156 L1537.6,166Z" fill="#fff" stroke="#fff" stroke-width="3" stroke-linejoin="round"/>
<path d="M1532.5,129.5 V174" stroke="#2323b4" stroke-width="1.3"/>
<path d="M1491.5,164.2 L1532.5,174" stroke="#3c9a3c" stroke-width="1.2"/>
<path d="M1532.5,174 L1559.5,158.6" stroke="#d03030" stroke-width="1.2"/>
<text x="1532.6" y="127.6" font-family="Liberation Sans,sans-serif" font-size="9.6" font-weight="700" fill="#1c1cb0" text-anchor="middle">Z</text>
<text x="1485" y="166.6" font-family="Liberation Sans,sans-serif" font-size="9.6" font-weight="700" fill="#2e8f2e" text-anchor="middle">Y</text>
<text x="1563.4" y="160" font-family="Liberation Sans,sans-serif" font-size="9.6" font-weight="700" fill="#cc2a2a" text-anchor="middle">X</text>
<text transform="translate(1511.6 149) skewY(11)" font-family="Liberation Sans,sans-serif" font-size="8.6" fill="#222" text-anchor="middle">Left</text>
<text transform="translate(1546 147.6) skewY(-28) scale(.82 1)" font-family="Liberation Sans,sans-serif" font-size="8.4" fill="#222" text-anchor="middle">Front</text>
<text transform="translate(1524.6 118.4) rotate(-32) scale(.8 .5)" font-family="Liberation Sans,sans-serif" font-size="7" fill="#222" text-anchor="middle">Left</text>
</svg>
<svg class="abs" style="left:1555px;top:185.5px" width="16" height="16" viewBox="0 0 16 16"><path d="M1,3.4 L8.6,.8 L15,2.6 V11.6 L8,15.2 L1,12.4Z" fill="#d9d9d9" stroke="#555" stroke-width=".9" stroke-linejoin="round"/><path d="M1,3.4 L8,5.2 L15,2.6 M8,5.2V15.2" fill="none" stroke="#555" stroke-width=".8"/><path d="M1,3.4 L8,5.2 V15.2 L1,12.4Z" fill="#8f8f8f"/><path d="M8,5.2 L15,2.6 V11.6 L8,15.2Z" fill="#bcbcbc"/></svg>
<svg class="abs" style="left:1576.6px;top:190.6px" width="7" height="4.5" viewBox="0 0 7 4.5"><path d="M0,.3H7L3.5,4.2Z" fill="#222"/></svg>
<div class="abs" style="left:488px;top:448px;width:28px;height:28px;background:#fff;border:1px solid #cfcfcf;border-left:none"></div>
<svg class="abs" style="left:494px;top:455px" width="16" height="14" viewBox="0 0 16 14"><path d="M.6,.6 L2.8,2.8 L5,.6" fill="none" stroke="#222" stroke-width="1.3"/><path d="M2.8,4.6V13.6" stroke="#555" stroke-width=".8"/><path d="M7.2,1.4H15" stroke="#777" stroke-width="1"/><path d="M4.6,5.4H15 M4.6,9.4H15" stroke="#777" stroke-width="1"/><path d="M4.6,13.4H15" stroke="#222" stroke-width="1.4"/></svg>
<div class="abs" style="left:1573px;top:379px;width:28px;height:166px;background:#fff;border:1px solid #cfcfcf"></div>
<div class="abs" style="left:1574px;top:406.7px;width:26px;height:1px;background:#d8d8d8"></div>
<div class="abs" style="left:1574px;top:434.4px;width:26px;height:1px;background:#d8d8d8"></div>
<div class="abs" style="left:1574px;top:462.2px;width:26px;height:1px;background:#d8d8d8"></div>
<div class="abs" style="left:1574px;top:489.6px;width:26px;height:1px;background:#d8d8d8"></div>
<div class="abs" style="left:1574px;top:516.2px;width:26px;height:1px;background:#d8d8d8"></div>
<svg class="abs" style="left:1579px;top:385px" width="17" height="15" viewBox="0 0 17 15"><rect x=".8" y=".8" width="15.4" height="13.4" rx="2.4" fill="#fff" stroke="#333" stroke-width="1.2"/><path d="M3.4,4H13.6M3.4,6.6H13.6M3.4,9.2H13.6M3.4,11.6H13.6" stroke="#222" stroke-width="1.3"/></svg>
<svg class="abs" style="left:1578px;top:412px" width="18" height="18" viewBox="0 0 18 18"><path d="M4.6,8.6 L10.6,6 L16.6,8.6 V14 L10.6,17 L4.6,14Z M4.6,8.6 L10.6,11.2 L16.6,8.6 M10.6,11.2V17" fill="#fff" stroke="#333" stroke-width="1.1" stroke-linejoin="round"/><path d="M1,1.6H8 M1,3.8H8 M1,6H8 M2.6,.6V7 M4.6,.6V7 M6.6,.6V7" stroke="#1f3fa6" stroke-width="1.1"/></svg>
<svg class="abs" style="left:1578px;top:440px" width="18" height="17" viewBox="0 0 18 17"><rect x="1" y="1" width="4.6" height="4.6" fill="none" stroke="#999" stroke-width=".9"/><path d="M4.4,6.6 L8.6,9.4" stroke="#1f3fa6" stroke-width="1.1" stroke-dasharray="1.6 1"/><path d="M8,9.2 H11.4 V6.8 H13.8 L16.4,9 V15.8 H8Z" fill="#fff" stroke="#777" stroke-width="1"/><path d="M11.4,9.2 V13 H8 M13.8,6.8V13" fill="none" stroke="#999" stroke-width=".8"/></svg>
<svg class="abs" style="left:1578px;top:467px" width="18" height="18" viewBox="0 0 18 18"><rect x="8.4" y="1" width="7" height="9" fill="none" stroke="#1f3fa6" stroke-width="1.1" stroke-dasharray="1.6 1.2"/><rect x="1" y="10.4" width="14.6" height="5.6" rx="1" fill="#fff" stroke="#333" stroke-width="1.2"/><circle cx="12.8" cy="13.2" r="2.4" fill="#ccd6ee" stroke="#1f3fa6" stroke-width=".9"/></svg>
<svg class="abs" style="left:1579px;top:495px" width="17" height="17" viewBox="0 0 17 17"><path d="M8.6,.6 L14.6,4.4 L16.2,10.4 L12,16 H5 L.8,10.4 L2.6,4.4Z" fill="#e8eef6"/><path d="M8.6,.6 L8.6,8.4 L2.6,4.4Z" fill="#b8d4ec"/><path d="M8.6,8.4 L.8,10.4 L5,16Z" fill="#1f3f96"/><path d="M8.6,8.4 L5,16 H12Z" fill="#5a7fc0"/><path d="M8.6,8.4 L12,16 L16.2,10.4Z" fill="#a0a0a0"/><path d="M8.6,8.4 L16.2,10.4 L14.6,4.4Z" fill="#d0d8e4"/><path d="M8.6,8.4 L2.6,4.4 L.8,10.4Z" fill="#2f5fb0"/></svg>
<div class="abs" style="left:1577px;top:520px;width:22px;height:22px;font-size:14px;font-weight:700;color:#111;line-height:22px;white-space:nowrap;letter-spacing:-1px"><span style="font-size:15px;font-weight:700">(</span><i style="font-family:'Liberation Serif',serif;font-size:16px;font-weight:700">x</i><span style="font-size:15px;font-weight:700">)</span></div>
<svg class="abs" style="left:1579px;top:523px" width="7" height="7" viewBox="0 0 7 7"><path d="M.5,6.5V.5H6.5V6.5 M.5,2.5H6.5 M2.5,.5V4.5 M4.5,.5V4.5" fill="none" stroke="#111" stroke-width=".9"/></svg>
<svg class="abs" style="left:1518px;top:856.5px" width="15" height="11" viewBox="0 0 15 11"><path d="M.6,6.8 H5 M.6,6.8 V9.4 Q.6,10.4 1.6,10.4 H10 Q13.6,10 14.2,6 V3.6" fill="none" stroke="#222" stroke-width="1.1"/><ellipse cx="9.4" cy="3.6" rx="4.8" ry="3" fill="#fff" stroke="#222" stroke-width="1.1"/><ellipse cx="9.4" cy="3.4" rx="1.6" ry="1" fill="none" stroke="#222" stroke-width=".8"/><path d="M4.6,3.8 V6.8 Q5.6,8.6 9.4,8.6 Q13.6,8.2 14.2,6" fill="none" stroke="#222" stroke-width="1"/></svg>
<svg class="abs" style="left:1546px;top:856.5px" width="18" height="12" viewBox="0 0 18 12"><path d="M.8,11 A8.2,9.6 0 0 1 17.2,11Z" fill="none" stroke="#222" stroke-width="1.3"/><path d="M4,11 A5,6.2 0 0 1 14,11" fill="none" stroke="#222" stroke-width="1.2"/><path d="M7,10.6 L9,8.4 L11,10.6" fill="none" stroke="#222" stroke-width="1.1"/></svg>
<svg class="abs" style="left:1576.5px;top:855.5px" width="14" height="13" viewBox="0 0 14 13"><path d="M2,1H12 M7,1V11 M1.2,12.2H12.8" stroke="#222" stroke-width="1.4" fill="none"/><path d="M3,1.6 L.8,7.4H5.2Z M11,1.6 L8.8,7.4H13.2Z" fill="#555" stroke="#222" stroke-width=".7"/></svg>
</div>

<!-- HEADER -->
<div class="abs" id="hdr"></div>
<div class="abs" id="hdrc" style="left:0;top:0">
<svg class="abs" style="left:3.5px;top:7.5px" width="17.5" height="19" viewBox="0 0 17.5 19"><path d="M8.7,.4 L16.6,4.9 V14 L8.7,18.6 L.8,14 V4.9 Z" fill="#5fae3a"/><path d="M8.7,.4 L16.6,4.9 L13,7 L8.7,4.6 L4.4,7 V12 L.8,14 V4.9Z" fill="#4a9a2e"/><path d="M8.7,18.6 L.8,14 L4.4,12 L8.7,14.4 L13,12 V7 L16.6,4.9 V14Z" fill="#86cc58"/><path d="M8.7,4.6 L13,7 V12 L8.7,14.4 L4.4,12 V7Z" fill="#f7f7f7"/><circle cx="8.7" cy="9.5" r="2.5" fill="#f7f7f7" stroke="#5e5e5e" stroke-width="1.5"/><path d="M11.2,7.6V12" stroke="#5e5e5e" stroke-width="1.3"/></svg>
<div class="t" style="left:26px;top:6px;font-size:15.4px;color:#6a6a6a;letter-spacing:-.2px;line-height:20px">onshape</div>
<svg class="abs" style="left:94px;top:11px" width="14" height="12" viewBox="0 0 14 12"><path d="M0,1.2H14M0,6H14M0,10.8H14" stroke="#222" stroke-width="2.1"/></svg>
<div class="t" style="left:118px;top:5.6px;font-size:17.6px;font-weight:700;color:#1f1f1f;line-height:24px">RC Car</div>
<div class="t" style="left:183px;top:10px;font-size:13px;color:#8c8c8c;line-height:20px">Main</div>
<svg class="abs" style="left:220px;top:11px" width="13" height="13" viewBox="0 0 13 13"><g fill="none" stroke="#333" stroke-width="1.5" stroke-linecap="round"><path d="M5.6,7.4 a2.6,2.6 0 0 1 0,-3.6 l2,-2 a2.6,2.6 0 0 1 3.6,3.6 l-1,1"/><path d="M7.4,5.6 a2.6,2.6 0 0 1 0,3.6 l-2,2 a2.6,2.6 0 0 1 -3.6,-3.6 l1,-1"/></g></svg>
<svg class="abs" style="left:241px;top:11px" width="15" height="12" viewBox="0 0 15 12"><path d="M.7,11.3 V.7 H5.4 L6.8,2.4 H14.3 V11.3 Z" fill="none" stroke="#b5b5b5" stroke-width="1.2"/></svg>
<div class="t" style="left:259px;top:8px;font-size:13.2px;color:#777;line-height:20px">IF-DCV</div>
<svg class="abs" style="left:1297px;top:8px" width="16" height="18" viewBox="0 0 16 18"><path d="M8,1.6 C4.6,1.6 3.6,4.6 3.6,7.6 C3.6,11 2.4,12.4 1,13.6 H15 C13.6,12.4 12.4,11 12.4,7.6 C12.4,4.6 11.4,1.6 8,1.6Z" fill="#6e6e6e"/><path d="M6,15 a2,2 0 0 0 4,0Z" fill="#6e6e6e"/></svg>
<div class="abs" style="left:1305px;top:5px;width:12.4px;height:12.4px;background:#1c4bb0;border-radius:2px;color:#fff;font-size:8.5px;font-weight:700;line-height:12.4px;text-align:center">6</div>
<svg class="abs" style="left:1325px;top:10px" width="14" height="16" viewBox="0 0 14 16"><rect x=".8" y=".8" width="12.4" height="14.4" rx="1.6" fill="none" stroke="#444" stroke-width="1.3"/><path d="M6.4,4.6H11M6.4,8H11M6.4,11.4H11" stroke="#444" stroke-width="1.3"/><path d="M2.6,4.4l.9,.9l1.6,-1.8M2.6,7.8l.9,.9l1.6,-1.8M2.6,11.2l.9,.9l1.6,-1.8" fill="none" stroke="#444" stroke-width=".9"/></svg>
<svg class="abs" style="left:1351px;top:10px" width="16" height="16" viewBox="0 0 16 16"><g fill="none" stroke="#444" stroke-width="1.4"><rect x=".8" y=".8" width="5.6" height="5.6"/><rect x=".8" y="9.4" width="5.6" height="5.6"/><rect x="9.4" y="9.4" width="5.6" height="5.6"/><path d="M12.2,.2V7M8.8,3.6H15.6"/></g></svg>
<svg class="abs" style="left:1377px;top:10px" width="16" height="16" viewBox="0 0 16 16"><path d="M8.2,.8 C3.8,.8 1.4,3.6 1.4,7 C1.4,9.4 2.6,10.8 3.6,11.8 V15.4 H10.4 V13.4 H12.4 C13.2,13.4 13.4,12.8 13.4,12.2 V10 L15,9.2 L13.4,6.4 C13.2,3 11.4,.8 8.2,.8Z" fill="#6a6a6a"/><circle cx="6.2" cy="7.6" r="2" fill="#f7f7f7"/><circle cx="10" cy="5" r="1.5" fill="#f7f7f7"/><circle cx="6.2" cy="7.6" r=".8" fill="#6a6a6a"/></svg>
<div class="abs" style="left:1401.5px;top:2px;width:49.5px;height:27.5px;background:#1b4db1;border-radius:4px;color:#fff;font-size:12.2px;line-height:29.6px;text-align:center;font-weight:400;letter-spacing:.1px;-webkit-text-stroke:.3px #fff">Share</div>
<svg class="abs" style="left:1459.5px;top:10px" width="16" height="16" viewBox="0 0 16 16"><circle cx="8" cy="8" r="7.6" fill="#555"/></svg><div class="abs" style="left:1459.5px;top:10px;width:16px;height:16px;color:#fff;font-weight:700;font-size:12.5px;line-height:16.4px;text-align:center">?</div>
<svg class="abs" style="left:1480.5px;top:16px" width="8" height="5" viewBox="0 0 8 5"><path d="M0,.4H8L4,4.6Z" fill="#333"/></svg>
<svg class="abs" style="left:1497.5px;top:7.5px" width="21" height="21" viewBox="0 0 21 21"><defs><clipPath id="cav"><circle cx="10.5" cy="10.5" r="10.2"/></clipPath></defs><g clip-path="url(#cav)"><rect width="21" height="21" fill="#3a5f8a"/><rect y="12" width="21" height="9" fill="#222"/><ellipse cx="10.5" cy="10" rx="4.6" ry="5.4" fill="#7a5a4a"/><path d="M5.4,8 Q10.5,1.4 15.6,8 L15.6,5 Q10.5,-.5 5.4,5Z" fill="#1a1a1a"/><rect x="5.8" y="8" width="9.4" height="2.6" fill="#111"/><path d="M2,21 Q10.5,12.4 19,21Z" fill="#8a2020"/></g></svg>
<div class="t" style="left:1522px;top:7.2px;font-size:11.6px;color:#222;line-height:20px">Roy Mutalik</div>
<svg class="abs" style="left:1587px;top:16px" width="8" height="5" viewBox="0 0 8 5"><path d="M0,.4H8L4,4.6Z" fill="#333"/></svg>
</div>

<!-- SIDEBAR -->
<div class="abs" id="side"></div>
<div class="abs" id="sidec" style="left:0;top:0">
<svg class="abs" style="left:8px;top:40px" width="17.5" height="16.5" viewBox="0 0 18 17"><g fill="none" stroke="#222" stroke-width="1.5"><circle cx="3.6" cy="3.6" r="2.6"/><path d="M3.6,6.2V12.6 M3.6,9.6 Q3.6,12.8 7,12.8"/><path d="M9.2,2.6H17.4M9.2,7.8H17.4M9.2,13H17.4"/></g><circle cx="3.6" cy="14" r="1.7" fill="#222"/></svg>
<svg class="abs" style="left:9px;top:69px" width="16" height="18" viewBox="0 0 16 18"><path d="M3,.4V16.6" stroke="#222" stroke-width="1.5" stroke-dasharray="2 1.4"/><circle cx="3" cy="7.8" r="2.6" fill="#222"/><path d="M11.4,7V14.6M7.6,10.8H15.2" stroke="#1f3fa6" stroke-width="1.6"/></svg>
<svg class="abs" style="left:7px;top:99px" width="19" height="16" viewBox="0 0 19 16"><path d="M7,1 L13,10 H1Z" fill="#222"/><path d="M10.2,13.8 L16.4,6.2 L18,7.6 L11.8,15 L9.6,15.6Z" fill="#fff" stroke="#222" stroke-width="1.1"/></svg>
<svg class="abs" style="left:7px;top:127px" width="18" height="16" viewBox="0 0 18 16"><path d="M9,.8 C4.2,.8 .8,3.4 .8,6.6 C.8,8.6 2.2,10.4 4.4,11.4 L3.2,15 L7.4,12.3 C8,12.4 8.5,12.4 9,12.4 C13.8,12.4 17.2,9.8 17.2,6.6 C17.2,3.4 13.8,.8 9,.8Z" fill="#222"/></svg>
<svg class="abs" style="left:8px;top:156px" width="18" height="17" viewBox="0 0 21 20"><g fill="none" stroke="#222" stroke-width="1.2" stroke-linejoin="round"><path d="M1,8.6 L7.6,6 L14,8.6 V15.4 L7.6,18.6 L1,15.4Z"/><path d="M1,8.6 L7.6,11.4 L14,8.6 M7.6,11.4V18.6"/></g><circle cx="15.8" cy="4.6" r="4" fill="#222"/><path d="M15.8,2.4V5.2M15.8,6.2V7" stroke="#fff" stroke-width="1.1"/></svg>
<svg class="abs" style="left:8.5px;top:185.5px" width="17" height="17" viewBox="0 0 20 20"><g fill="none" stroke="#222" stroke-width="1.4"><circle cx="11" cy="11.4" r="7"/><path d="M11,7.4V11.6L8.4,13.6"/><path d="M8.6,1.6H13.4M11,1.6V4.4M16,4.6l1.6,1.6"/><path d="M.4,8.4H4 M1.4,11.6H4 M.4,14.8H4.6" stroke-width="1.1"/></g></svg>
<div class="abs" style="left:0;top:209px;width:33px;height:1px;background:#dcdcdc"></div>
<svg class="abs" style="left:9.6px;top:217.4px" width="13.4" height="14.2" viewBox="0 0 16 17"><rect x=".8" y=".8" width="14.4" height="15.4" rx="1.6" fill="none" stroke="#222" stroke-width="1.4"/><path d="M7.4,4.8H12.4M7.4,8.6H12.4M7.4,12.4H12.4" stroke="#222" stroke-width="1.4"/><path d="M3,4.6l1,1l1.8,-2M3,8.4l1,1l1.8,-2M3,12.2l1,1l1.8,-2" fill="none" stroke="#222" stroke-width="1"/></svg>
<svg class="abs" style="left:8px;top:880px" width="17" height="14" viewBox="0 0 17 14"><path d="M.4,.6H14.8V4.8H8.4 Q4.4,5 3.4,7.6 L.4,4.6Z" fill="#222"/><circle cx="9.2" cy="8" r="3.5" fill="#f5f5f5" stroke="#222" stroke-width="1.5"/><path d="M11.8,10.6L15.6,13.6" stroke="#222" stroke-width="1.8"/></svg>
</div>

<!-- TOOLBAR -->
<div class="abs" id="tb"></div>
<div class="abs" id="tbc" style="left:0;top:0">
<div class="abs" style="left:91.4px;top:38px;width:1.3px;height:20.5px;background:#cfcfcf"></div>
<div class="abs" style="left:123.4px;top:38px;width:1.3px;height:20.5px;background:#cfcfcf"></div>
<div class="abs" style="left:191.4px;top:38px;width:1.3px;height:20.5px;background:#cfcfcf"></div>
<div class="abs" style="left:223.4px;top:38px;width:1.3px;height:20.5px;background:#cfcfcf"></div>
<div class="abs" style="left:452.4px;top:38px;width:1.3px;height:20.5px;background:#cfcfcf"></div>
<div class="abs" style="left:512.4px;top:38px;width:1.3px;height:20.5px;background:#cfcfcf"></div>
<div class="abs" style="left:714.4px;top:38px;width:1.3px;height:20.5px;background:#cfcfcf"></div>
<div class="abs" style="left:831.4px;top:38px;width:1.3px;height:20.5px;background:#cfcfcf"></div>
<div class="abs" style="left:891.4px;top:38px;width:1.3px;height:20.5px;background:#cfcfcf"></div>
<svg class="abs" style="left:38.5px;top:39.0px" width="18" height="18" viewBox="0 0 18 18"><path d="M7.4,3.4 L2.6,8 L7.4,12.4 V9.6 C10.6,9.4 12.6,10.6 13.6,14.4 C14.4,9.4 12,6.4 7.4,6.2Z" fill="#1e1e1e"/></svg>
<svg class="abs" style="left:67.5px;top:39.0px" width="18" height="18" viewBox="0 0 18 18"><path d="M10.6,3.4 L15.4,8 L10.6,12.4 V9.6 C7.4,9.4 5.4,10.6 4.4,14.4 C3.6,9.4 6,6.4 10.6,6.2Z" fill="#9a9a9a"/></svg>
<svg class="abs" style="left:99.3px;top:39.0px" width="18" height="18" viewBox="0 0 18 18"><circle cx="9" cy="8.6" r="7.4" fill="#dfe8f3" stroke="#b9cde6" stroke-width="1.6"/><path d="M9,4.2 a4,4 0 1 1 -3.6,2.4 M9,8.4 V13.6 l2,-1.6" fill="none" stroke="#b1c6e0" stroke-width="1.6"/></svg>
<svg class="abs" style="left:131.0px;top:39.0px" width="18" height="18" viewBox="0 0 18 18"><g fill="none" stroke="#1e1e1e" stroke-width="1.2" stroke-linejoin="round"><path d="M5.6,5.4 H14.2 L15.4,6.8 V15.8 H5.6Z"/><path d="M5.6,5.4 L3.4,3.4 V13.6 L5.6,15.8 M3.4,3.4 H7.2"/><path d="M8.2,1.6 C11.6,1.4 13,3.2 12.6,5.8"/></g><path d="M8.2,7.6 H12.8 L10.5,10.8Z" fill="#1e1e1e"/><path d="M9.6,.2 L7,1.8 L9.8,3.4Z" fill="#1e1e1e"/></svg>
<div class="abs t" style="left:151.6px;top:40px;font-size:11.3px;font-weight:400;color:#2a2a2a;letter-spacing:.25px;-webkit-text-stroke:.35px #2a2a2a">Insert</div>
<svg class="abs" style="left:199.0px;top:39.0px" width="18" height="18" viewBox="0 0 18 18"><circle cx="9" cy="8.6" r="7.4" fill="none" stroke="#1e1e1e" stroke-width="1.1"/><circle cx="9" cy="8.6" r="5.6" fill="none" stroke="#1e1e1e" stroke-width="1.1"/><path d="M9,4.4V8.8H13" fill="none" stroke="#1e1e1e" stroke-width="1.2"/></svg>
<svg class="abs" style="left:230.6px;top:39.0px" width="18" height="18" viewBox="0 0 18 18"><path d="M3,4.6 V13 a6,2.8 0 0 0 12,0 V4.6" fill="#f1f1f1" stroke="#777" stroke-width="1"/><ellipse cx="9" cy="4.6" rx="6" ry="2.8" fill="#fff" stroke="#777" stroke-width="1"/><path d="M3,9 V13 a6,2.8 0 0 0 12,0 V9 a6,2.8 0 0 1 -3.4,2.4 V9.6 a6,3 0 0 1 -5.2,0 V11.4 A6,2.8 0 0 1 3,9Z" fill="#444"/></svg>
<svg class="abs" style="left:258.6px;top:39.0px" width="18" height="18" viewBox="0 0 18 18"><ellipse cx="9" cy="6" rx="6.2" ry="3" fill="#fff" stroke="#777" stroke-width="1"/><path d="M2.8,6 V11.6 a6.2,3 0 0 0 12.4,0 V6" fill="none" stroke="#777" stroke-width="1"/><path d="M3.4,9.8 a7,3.6 0 0 0 4.6,2.6 M14.6,9.8 a7,3.6 0 0 1 -4.6,2.6" fill="none" stroke="#1e1e1e" stroke-width="1.5"/><path d="M.6,8.2 L5,7.8 L3,11.6Z M17.4,8.2 L13,7.8 L15,11.6Z" fill="#1e1e1e"/></svg>
<svg class="abs" style="left:287.4px;top:39.0px" width="18" height="18" viewBox="0 0 18 18"><path d="M4.4,6.6 V14 a4.8,2.2 0 0 0 9.6,0 V6.6" fill="#fff" stroke="#666" stroke-width="1"/><ellipse cx="9.2" cy="6.6" rx="4.8" ry="2.2" fill="#fff" stroke="#666" stroke-width="1"/><path d="M9.2,6.4V2" stroke="#1e1e1e" stroke-width="1.4"/><path d="M9.2,0 L11.4,3 H7Z" fill="#1e1e1e"/><path d="M1.6,5.4V13.6 M16.8,5.4V13.6" stroke="#1e1e1e" stroke-width="1.6"/></svg>
<svg class="abs" style="left:315.6px;top:39.0px" width="18" height="18" viewBox="0 0 18 18"><rect x="2.4" y="2.6" width="13.2" height="12.6" fill="#f2f2f2" stroke="#8a8a8a" stroke-width="1"/><path d="M9,2.6V15 M2.6,8.8H15.4" stroke="#1e1e1e" stroke-width="1.5"/><path d="M9,.8l2.2,2.8H6.8Z M9,16.8l2.2,-2.8H6.8Z M1,8.8l2.8,-2.2V11Z M17,8.8l-2.8,-2.2V11Z" fill="#1e1e1e"/></svg>
<svg class="abs" style="left:344.0px;top:39.0px" width="18" height="18" viewBox="0 0 18 18"><ellipse cx="9" cy="7" rx="6" ry="3" fill="#fff" stroke="#777" stroke-width="1"/><path d="M3,7 V11.4 a6,3 0 0 0 12,0 V7" fill="none" stroke="#777" stroke-width="1"/><path d="M3.6,10.2 a7,3.6 0 0 0 4.2,2.6 M14.4,10.2 a7,3.6 0 0 1 -4.2,2.6" fill="none" stroke="#1e1e1e" stroke-width="1.5"/><path d="M.8,8.6 L5.2,8.4 L3,12Z M17.2,8.6 L12.8,8.4 L15,12Z" fill="#1e1e1e"/><path d="M9,6.6V2.6" stroke="#1e1e1e" stroke-width="1.4"/><path d="M9,.4 L11.2,3.4 H6.8Z" fill="#1e1e1e"/></svg>
<svg class="abs" style="left:372.4px;top:39.0px" width="18" height="18" viewBox="0 0 18 18"><path d="M4.6,11 H13.4 V14.6 H4.6Z" fill="#fff" stroke="#777" stroke-width="1"/><path d="M6.8,11 V6.4 a2.2,1.2 0 0 1 4.4,0 V11" fill="#fff" stroke="#777" stroke-width="1"/><path d="M9,5.4V2 M3,8.4H15" stroke="#1e1e1e" stroke-width="1.4"/><path d="M9,0l2.2,2.8H6.8Z M.8,8.4l2.8,-2V10.4Z M17.2,8.4l-2.8,-2V10.4Z" fill="#1e1e1e"/></svg>
<svg class="abs" style="left:400.6px;top:39.0px" width="18" height="18" viewBox="0 0 18 18"><circle cx="9" cy="8.8" r="6.2" fill="none" stroke="#1e1e1e" stroke-width="1.5"/><path d="M9,1.6V16 M1.8,8.8H16.2" stroke="#1e1e1e" stroke-width="1.5"/><path d="M9,.2l2,2.6H7Z M9,17.4l2,-2.6H7Z M.4,8.8l2.6,-2V10.8Z M17.6,8.8l-2.6,-2V10.8Z" fill="#1e1e1e"/></svg>
<svg class="abs" style="left:428.6px;top:39.0px" width="18" height="18" viewBox="0 0 18 18"><path d="M2,5.4 L5.8,2.4 V13 L2,16Z M16,5.4 L12.2,2.4 V13 L16,16Z" fill="#eee" stroke="#888" stroke-width="1"/><path d="M5.6,9.2H12.4" stroke="#1e1e1e" stroke-width="1.5"/><path d="M4.4,9.2l3,-2.2V11.4Z M13.6,9.2l-3,-2.2V11.4Z" fill="#1e1e1e"/></svg>
<svg class="abs" style="left:460.4px;top:39.0px" width="18" height="18" viewBox="0 0 18 18"><path d="M3.2,3.6 C8,1.2 13.6,4 14.6,12.6" fill="none" stroke="#1e1e1e" stroke-width="1.5"/><path d="M1,2.2 L5.4,1.8 L4.2,6Z M14.8,16 L12.2,12.4 L16.8,12Z" fill="#1e1e1e"/><path d="M6.4,6.4 C9.4,5.4 11.8,7.2 11.6,10 C11.4,12 9.8,13 9.4,15.6 M6.4,6.4 L9.6,10.4" fill="none" stroke="#888" stroke-width="1"/></svg>
<svg class="abs" style="left:488.6px;top:39.0px" width="18" height="18" viewBox="0 0 18 18"><path d="M1.8,1.6V16 M16.2,1.6V16" stroke="#1e1e1e" stroke-width="1.7"/><rect x="4.4" y="4.6" width="9.2" height="8.6" fill="#eee" stroke="#888" stroke-width="1"/><path d="M3,9H15" stroke="#1e1e1e" stroke-width="1.3"/><path d="M8.6,9l-3,-2V11Z M9.4,9l3,-2V11Z" fill="#1e1e1e"/></svg>
<svg class="abs" style="left:520.4px;top:39.0px" width="18" height="18" viewBox="0 0 18 18"><rect x="4" y="4" width="7" height="7" fill="none" stroke="#555" stroke-width="1.1"/><rect x="7" y="7" width="7" height="7" fill="none" stroke="#555" stroke-width="1.1"/><path d="M1.2,4.4V1.2H4.4 M13.6,1.2H16.8V4.4 M16.8,13.6V16.8H13.6 M4.4,16.8H1.2V13.6" fill="none" stroke="#1e1e1e" stroke-width="1.5"/><path d="M6.4,1.2H11.6 M6.4,16.8H11.6 M1.2,6.4V11.6 M16.8,6.4V11.6" stroke="#1e1e1e" stroke-width="1.1" stroke-dasharray="1.6 1.6"/></svg>
<svg class="abs" style="left:548.6px;top:39.0px" width="18" height="18" viewBox="0 0 18 18"><path d="M5,6 V13.4 a5.4,2.6 0 0 0 10.8,0 V6" fill="#fff" stroke="#666" stroke-width="1"/><ellipse cx="10.4" cy="6" rx="5.4" ry="2.6" fill="#fff" stroke="#666" stroke-width="1"/><path d="M7,10.6 a5,2 0 0 0 7,0 v2.4 a5,2 0 0 1 -7,0Z" fill="none" stroke="#666" stroke-width=".9"/><path d="M5.4,.6 L6.9,4 L10.6,4.4 L7.8,6.8 L8.6,10.4 L5.4,8.6 L2.2,10.4 L3,6.8 L.2,4.4 L3.9,4Z" fill="#1e1e1e"/></svg>
<svg class="abs" style="left:576.6px;top:39.0px" width="18" height="18" viewBox="0 0 18 18"><path d="M2.6,5 V13 a5.4,2.6 0 0 0 10.8,0 V5" fill="#fff" stroke="#666" stroke-width="1"/><ellipse cx="8" cy="5" rx="5.4" ry="2.6" fill="#fff" stroke="#666" stroke-width="1"/><path d="M2.6,9.4 a5.4,2.6 0 0 0 10.8,0" fill="none" stroke="#666" stroke-width=".9"/><path d="M10.4,9.6 L16.6,13 L14.2,13.8 L16,16.6 L14.8,17.4 L13,14.6 L11.2,16.4Z" fill="#1e1e1e"/></svg>
<svg class="abs" style="left:605.0px;top:39.0px" width="18" height="18" viewBox="0 0 18 18"><path d="M2,10.4 a3.4,1.6 0 0 1 6.8,0 H16 V15.6 a2,1 0 0 1 -2,1 H4 a2,1 0 0 1 -2,-1Z" fill="#fff" stroke="#555" stroke-width="1"/><path d="M2,10.4 V7.4 a3.4,1.6 0 0 1 6.8,0 V10.4" fill="#fff" stroke="#555" stroke-width="1"/><ellipse cx="5.4" cy="7.4" rx="3.4" ry="1.6" fill="none" stroke="#555" stroke-width=".9"/><path d="M10.2,2.6 V5.4 a3,1.4 0 0 0 6,0 V2.6" fill="#fff" stroke="#555" stroke-width="1"/><ellipse cx="13.2" cy="2.6" rx="3" ry="1.4" fill="#fff" stroke="#555" stroke-width="1"/></svg>
<svg class="abs" style="left:633.4px;top:39.0px" width="18" height="18" viewBox="0 0 18 18"><path d="M3.4,3.4 H6.6 V1.6 H9.4 V3.4 H10.6 V8.6 H3.4Z" fill="#fff" stroke="#555" stroke-width="1"/><path d="M9.4,10.4 H12 V9 H14.6 V10.4 H16.4 V16.4 H9.4Z" fill="#fff" stroke="#555" stroke-width="1"/><path d="M4.4,10 V13.6 H7.4" fill="none" stroke="#1e1e1e" stroke-width="1.2"/><path d="M8.6,13.6l-2.4,-1.8V15.4Z" fill="#1e1e1e"/></svg>
<svg class="abs" style="left:662.4px;top:39.0px" width="18" height="18" viewBox="0 0 18 18"><rect x="1.6" y="1.6" width="14.8" height="14.8" rx="1.6" fill="#666"/><rect x="2.6" y="2.6" width="6" height="6" fill="#f4f4f4"/><rect x="9.4" y="9.4" width="6" height="6" fill="#8e8e8e"/><path d="M9,1.6V16.4M1.6,9H16.4" stroke="#444" stroke-width=".8"/></svg>
<svg class="abs" style="left:690.6px;top:39.0px" width="18" height="18" viewBox="0 0 18 18"><g fill="#fff" stroke="#444" stroke-width="1"><ellipse cx="5.4" cy="5.6" rx="3.6" ry="2.2" transform="rotate(-25 5.4 5.6)"/><ellipse cx="12.4" cy="5" rx="3.6" ry="2.2" transform="rotate(25 12.4 5)"/><ellipse cx="5.6" cy="12" rx="3.6" ry="2.2" transform="rotate(25 5.6 12)"/><ellipse cx="12.6" cy="12.2" rx="3.6" ry="2.2" transform="rotate(-25 12.6 12.2)"/></g><circle cx="9" cy="8.6" r="2" fill="#555"/></svg>
<svg class="abs" style="left:722.4px;top:39.0px" width="18" height="18" viewBox="0 0 18 18"><circle cx="5.6" cy="5.6" r="2.7" fill="none" stroke="#1e1e1e" stroke-width="1.67"/><rect x="4.8" y="0.6999999999999994" width="1.6" height="2.8" fill="#1e1e1e" transform="rotate(0.0 5.6 5.6)"/><rect x="4.8" y="0.6999999999999994" width="1.6" height="2.8" fill="#1e1e1e" transform="rotate(45.0 5.6 5.6)"/><rect x="4.8" y="0.6999999999999994" width="1.6" height="2.8" fill="#1e1e1e" transform="rotate(90.0 5.6 5.6)"/><rect x="4.8" y="0.6999999999999994" width="1.6" height="2.8" fill="#1e1e1e" transform="rotate(135.0 5.6 5.6)"/><rect x="4.8" y="0.6999999999999994" width="1.6" height="2.8" fill="#1e1e1e" transform="rotate(180.0 5.6 5.6)"/><rect x="4.8" y="0.6999999999999994" width="1.6" height="2.8" fill="#1e1e1e" transform="rotate(225.0 5.6 5.6)"/><rect x="4.8" y="0.6999999999999994" width="1.6" height="2.8" fill="#1e1e1e" transform="rotate(270.0 5.6 5.6)"/><rect x="4.8" y="0.6999999999999994" width="1.6" height="2.8" fill="#1e1e1e" transform="rotate(315.0 5.6 5.6)"/><circle cx="12" cy="12" r="3.3" fill="none" stroke="#1e1e1e" stroke-width="2.05"/><rect x="11.05" y="6.3" width="1.9" height="3.0" fill="#1e1e1e" transform="rotate(0.0 12 12)"/><rect x="11.05" y="6.3" width="1.9" height="3.0" fill="#1e1e1e" transform="rotate(45.0 12 12)"/><rect x="11.05" y="6.3" width="1.9" height="3.0" fill="#1e1e1e" transform="rotate(90.0 12 12)"/><rect x="11.05" y="6.3" width="1.9" height="3.0" fill="#1e1e1e" transform="rotate(135.0 12 12)"/><rect x="11.05" y="6.3" width="1.9" height="3.0" fill="#1e1e1e" transform="rotate(180.0 12 12)"/><rect x="11.05" y="6.3" width="1.9" height="3.0" fill="#1e1e1e" transform="rotate(225.0 12 12)"/><rect x="11.05" y="6.3" width="1.9" height="3.0" fill="#1e1e1e" transform="rotate(270.0 12 12)"/><rect x="11.05" y="6.3" width="1.9" height="3.0" fill="#1e1e1e" transform="rotate(315.0 12 12)"/></svg>
<svg class="abs" style="left:750.6px;top:39.0px" width="18" height="18" viewBox="0 0 18 18"><circle cx="9" cy="8" r="4.2" fill="none" stroke="#1e1e1e" stroke-width="2.60"/><rect x="8.0" y="1.1999999999999997" width="2" height="3.2" fill="#1e1e1e" transform="rotate(0.0 9 8)"/><rect x="8.0" y="1.1999999999999997" width="2" height="3.2" fill="#1e1e1e" transform="rotate(36.0 9 8)"/><rect x="8.0" y="1.1999999999999997" width="2" height="3.2" fill="#1e1e1e" transform="rotate(72.0 9 8)"/><rect x="8.0" y="1.1999999999999997" width="2" height="3.2" fill="#1e1e1e" transform="rotate(108.0 9 8)"/><rect x="8.0" y="1.1999999999999997" width="2" height="3.2" fill="#1e1e1e" transform="rotate(144.0 9 8)"/><rect x="8.0" y="1.1999999999999997" width="2" height="3.2" fill="#1e1e1e" transform="rotate(180.0 9 8)"/><rect x="8.0" y="1.1999999999999997" width="2" height="3.2" fill="#1e1e1e" transform="rotate(216.0 9 8)"/><rect x="8.0" y="1.1999999999999997" width="2" height="3.2" fill="#1e1e1e" transform="rotate(252.0 9 8)"/><rect x="8.0" y="1.1999999999999997" width="2" height="3.2" fill="#1e1e1e" transform="rotate(288.0 9 8)"/><rect x="8.0" y="1.1999999999999997" width="2" height="3.2" fill="#1e1e1e" transform="rotate(324.0 9 8)"/><path d="M1,15.8H17 M3,15.8l2,-2.4l2,2.4 M7,15.8l2,-2.4l2,2.4 M11,15.8l2,-2.4l2,2.4" fill="#1e1e1e" stroke="#1e1e1e" stroke-width="1.2"/></svg>
<svg class="abs" style="left:778.6px;top:39.0px" width="18" height="18" viewBox="0 0 18 18"><g stroke="#1e1e1e" stroke-width="1.5" fill="none"><path d="M3.4,2V12 M6.4,2V12 M9.4,2V12 M12.4,2V12 M15.4,2V12"/><path d="M1.6,4.6 L16.4,7.6 M1.6,8 L16.4,11" stroke-width="1"/></g><rect x="2" y="2.6" width="14.4" height="9" fill="#bbb" opacity=".35"/><path d="M2,15.4H13" stroke="#1e1e1e" stroke-width="1.5"/><path d="M16.8,15.4l-3.6,-2.2V17.6Z" fill="#1e1e1e"/></svg>
<svg class="abs" style="left:807.0px;top:39.0px" width="18" height="18" viewBox="0 0 18 18"><rect x="5.6" y="2.2" width="10.6" height="5" rx="2.4" fill="#fff" stroke="#777" stroke-width="1"/><rect x="1.8" y="10.6" width="10.6" height="5" rx="2.4" fill="#fff" stroke="#777" stroke-width="1"/><path d="M2.6,4.8H7.4 M10.6,13.2H15.4" stroke="#1e1e1e" stroke-width="1.4"/><path d="M.6,4.8l3,-2.2V7Z M17.4,13.2l-3,-2.2V15.4Z" fill="#1e1e1e"/></svg>
<svg class="abs" style="left:839.4px;top:39.0px" width="18" height="18" viewBox="0 0 18 18"><path d="M2.6,1.6 H14.6 V9 M9,15.8 H2.6 V1.6" fill="none" stroke="#555" stroke-width="1.1"/><path d="M5,5H12.4M5,7.6H12.4" stroke="#777" stroke-width="1"/><path d="M5.6,10.6 l1,2 1.4,-2" fill="none" stroke="#555" stroke-width=".9"/><ellipse cx="13" cy="13.4" rx="4.2" ry="2.6" fill="#fff" stroke="#1e1e1e" stroke-width="1.1"/><circle cx="13" cy="13.4" r="1.3" fill="#1e1e1e"/><path d="M9.4,16.6 L16.6,10.2" stroke="#1e1e1e" stroke-width="1.1"/></svg>
<svg class="abs" style="left:867.4px;top:39.0px" width="18" height="18" viewBox="0 0 18 18"><path d="M3.4,6.6 V15 a2,1 0 0 0 4,0 V6.6 a2,1 0 0 0 -4,0Z" fill="#fff" stroke="#666" stroke-width="1"/><path d="M8.4,3.6 L10.4,2 H13 V15.6 H8.4Z" fill="#fff" stroke="#666" stroke-width="1"/><path d="M13,2 L15.4,3.4 V16.4 L13,15.6" fill="#ddd" stroke="#666" stroke-width="1"/><path d="M4,1V6.2 M1.4,3.6H6.6" stroke="#1f3fa6" stroke-width="1.5"/></svg>
<svg class="abs" style="left:899.4px;top:39.0px" width="18" height="18" viewBox="0 0 18 18"><ellipse cx="11" cy="8.6" rx="3.6" ry="6.6" transform="rotate(12 11 8.6)" fill="none" stroke="#1e1e1e" stroke-width="1.7"/><path d="M10.8,8.8 L3.6,14.2" stroke="#1f3fa6" stroke-width="1.5"/><path d="M1.6,15.8 L3,11.8 L6,15Z" fill="#1f3fa6"/></svg>
<svg class="abs" style="left:927.6px;top:39.0px" width="18" height="18" viewBox="0 0 18 18"><ellipse cx="9" cy="9" rx="6.4" ry="3.6" fill="none" stroke="#1e1e1e" stroke-width="1.7"/><path d="M4,3.4 C7,1.6 11,1.6 14,3.4 M14,14.6 C11,16.4 7,16.4 4,14.6" fill="none" stroke="#1f3fa6" stroke-width="1.2"/><path d="M15.4,4.4l-3.4,-.2l2,-2.2Z M2.6,13.6l3.4,.2l-2,2.2Z" fill="#1f3fa6"/></svg>
<svg class="abs" style="left:955.6px;top:39.0px" width="18" height="18" viewBox="0 0 18 18"><ellipse cx="9" cy="6.4" rx="6.4" ry="3.6" fill="none" stroke="#1e1e1e" stroke-width="1.7"/><path d="M3.6,11.6V15 M7.2,12.4V16 M10.8,12.4V16 M14.4,11.6V15" stroke="#1f3fa6" stroke-width="1.3" stroke-dasharray="2 1"/></svg>
<svg class="abs" style="left:983.6px;top:39.0px" width="18" height="18" viewBox="0 0 18 18"><ellipse cx="9" cy="9" rx="5.8" ry="3.4" fill="none" stroke="#1e1e1e" stroke-width="1.7"/><path d="M1.6,2.4l3.6,2.8 M16.4,2.4l-3.6,2.8 M1.6,15.6l3.6,-2.8 M16.4,15.6l-3.6,-2.8" stroke="#1f3fa6" stroke-width="1.3"/></svg>
<svg class="abs" style="left:1012.0px;top:39.0px" width="18" height="18" viewBox="0 0 18 18"><path d="M14.6,6.4 a5.8,3.2 0 1 0 -3.4,4.6" fill="none" stroke="#1e1e1e" stroke-width="1.7"/><path d="M3.4,1.4V3.2 M7.2,.6V2.4 M11,.6V2.4 M14.6,1.4V3.2" stroke="#1f3fa6" stroke-width="1.2"/><path d="M9.4,9V14.4" stroke="#1f3fa6" stroke-width="1.4"/><path d="M9.4,17l-2.2,-3.2H11.6Z" fill="#1f3fa6"/></svg>
<div class="abs" style="left:1044px;top:35px;width:135px;height:27px;background:#eeeeee;border-radius:3px"></div>
<div class="abs t" style="left:1053px;top:40px;font-size:11.3px;color:#333">Search tools...</div>
<div class="abs" style="left:1127.5px;top:41px;width:28px;height:15px;border:1px solid #9a9a9a;border-radius:2px;background:#f8f8f8;font-size:8.6px;line-height:13px;text-align:center;color:#333;white-space:nowrap">alt/⌥</div>
<div class="abs" style="left:1156.5px;top:41px;width:14px;height:15px;border:1px solid #9a9a9a;border-radius:2px;background:#f8f8f8;font-size:9px;line-height:12.4px;text-align:center;color:#333">c</div>
</div>

<!-- PANEL -->
<div class="abs" id="panel"></div>
<div class="abs" id="panelc" style="left:0;top:0">
<svg class="abs" style="left:41px;top:75px" width="14" height="15" viewBox="0 0 14 15"><path d="M1.2,1.2 H12.8 L8.4,6.8 V12.6 L5.6,11 V6.8 Z" fill="none" stroke="#333" stroke-width="1.25" stroke-linejoin="round"/></svg>
<div class="abs" id="filter" style="left:66px;top:70px;width:386px;height:25px"><span>Filter by name</span></div>
<svg class="abs" style="left:462px;top:76px" width="13" height="12" viewBox="0 0 13 12"><g stroke="#111" stroke-width="1.5"><path d="M3.4,1.2H13 M3.4,4.4H13 M3.4,7.6H13 M3.4,10.8H13"/><path d="M0,1.2H1.8 M0,4.4H1.8 M0,7.6H1.8 M0,10.8H1.8"/></g></svg>
<div class="abs" style="left:37px;top:100px;font-size:10.9px;font-weight:700;color:#222;line-height:16px;white-space:nowrap;letter-spacing:-.16px">Instances (22)</div>
<svg class="abs" style="left:463px;top:101px" width="17" height="13" viewBox="0 0 17 13"><path d="M2.2,6 V1 H6.2 L7.6,2.8 H15.8 V11.6 H6.6" fill="none" stroke="#555" stroke-width="1"/><path d="M3.8,5.4 V12 M.6,8.8 H7" stroke="#1f3fa6" stroke-width="1.5"/><path d="M.4,11.8 H2" stroke="#1f3fa6" stroke-width=".8" stroke-dasharray="1 1"/></svg>
<div class="abs" style="left:41px;top:293px;width:1px;height:131px;background:#d6d6d6"></div>
<svg class="abs" style="left:37.60px;top:123.20px" width="13.4" height="13.4" ><use href="#i-asm"/></svg>
<div class="abs t" style="left:55.6px;top:122.40px;color:#2a2a2a;letter-spacing:-0.430px;">TOP LEVEL</div>
<div class="abs" style="left:58px;top:148.49px;width:6.4px;height:6.4px;border-radius:50%;background:#dedede"></div>
<div class="abs t" style="left:71.6px;top:144.09px;color:#a9a9a9;letter-spacing:0.000px;">Origin</div>
<svg class="abs" style="left:54.60px;top:166.57px" width="13" height="13" ><use href="#i-surf"/></svg>
<div class="abs t" style="left:71.6px;top:165.78px;color:#2a2a2a;letter-spacing:-0.184px;">Car Body &lt;1&gt;</div>
<div class="abs bd" style="left:142.0px;top:165.38px;width:61px;letter-spacing:-0.153px">In progress</div>
<svg class="abs" style="left:411.00px;top:166.78px" width="13.4" height="13.4" ><use href="#i-mate"/></svg>
<svg class="abs" style="left:36.40px;top:189.06px" width="10" height="12" ><use href="#i-chr"/></svg>
<svg class="abs" style="left:54.60px;top:188.26px" width="13.4" height="13.4" ><use href="#i-asm"/></svg>
<div class="abs t" style="left:71.6px;top:187.46px;color:#2a2a2a;letter-spacing:0.090px;">Electronics Asm &lt;1&gt;</div>
<div class="abs bd" style="left:178.0px;top:187.06px;width:61px;letter-spacing:-0.153px">In progress</div>
<svg class="abs" style="left:36.40px;top:210.75px" width="10" height="12" ><use href="#i-chr"/></svg>
<svg class="abs" style="left:54.60px;top:209.95px" width="13.4" height="13.4" ><use href="#i-asm"/></svg>
<div class="abs t" style="left:71.6px;top:209.15px;color:#2a2a2a;letter-spacing:-0.021px;">Rear Left Corner &lt;1&gt;</div>
<div class="abs bd" style="left:179.5px;top:208.75px;width:61px;letter-spacing:-0.153px">In progress</div>
<svg class="abs" style="left:36.40px;top:232.44px" width="10" height="12" ><use href="#i-chr"/></svg>
<svg class="abs" style="left:54.60px;top:231.64px" width="13.4" height="13.4" ><use href="#i-asm"/></svg>
<div class="abs t" style="left:71.6px;top:230.84px;color:#2a2a2a;letter-spacing:0.036px;">Front Left Corner &lt;1&gt;</div>
<div class="abs bd" style="left:182.5px;top:230.44px;width:61px;letter-spacing:-0.153px">In progress</div>
<svg class="abs" style="left:36.40px;top:254.12px" width="10" height="12" ><use href="#i-chr"/></svg>
<svg class="abs" style="left:54.60px;top:253.32px" width="13.4" height="13.4" ><use href="#i-asm"/></svg>
<div class="abs t" style="left:71.6px;top:252.53px;color:#2a2a2a;letter-spacing:-0.017px;">Chassis Asm &lt;1&gt;</div>
<div class="abs bd" style="left:161.5px;top:252.12px;width:61px;letter-spacing:-0.153px">In progress</div>
<svg class="abs" style="left:35.40px;top:276.81px" width="12" height="10" ><use href="#i-chd"/></svg>
<svg class="abs" style="left:54.60px;top:275.01px" width="13.4" height="13.4" ><use href="#i-asm"/></svg>
<div class="abs t" style="left:71.6px;top:274.21px;color:#2a2a2a;letter-spacing:0.000px;">Front Right Corner &lt;1&gt;</div>
<div class="abs bd" style="left:189.0px;top:273.81px;width:61px;letter-spacing:-0.153px">In progress</div>
<svg class="abs" style="left:52.40px;top:297.50px" width="10" height="12" ><use href="#i-chr"/></svg>
<svg class="abs" style="left:70.30px;top:296.70px" width="13.4" height="13.4" ><use href="#i-asm"/></svg>
<div class="abs t" style="left:87.6px;top:295.90px;color:#2a2a2a;letter-spacing:-0.043px;">Front Right Suspension &lt;1&gt;</div>
<div class="abs bd" style="left:227.5px;top:295.50px;width:61px;letter-spacing:-0.153px">In progress</div>
<svg class="abs" style="left:52.40px;top:319.19px" width="10" height="12" ><use href="#i-chr"/></svg>
<svg class="abs" style="left:70.30px;top:318.39px" width="13.4" height="13.4" ><use href="#i-asm"/></svg>
<div class="abs t" style="left:87.6px;top:317.59px;color:#2a2a2a;letter-spacing:-0.228px;">WHEEL (2) &lt;1&gt;</div>
<div class="abs bd" style="left:166.5px;top:317.19px;width:61px;letter-spacing:-0.153px">In progress</div>
<svg class="abs" style="left:52.40px;top:340.88px" width="10" height="12" ><use href="#i-chr"/></svg>
<svg class="abs" style="left:70.30px;top:340.07px" width="13.4" height="13.4" ><use href="#i-asm"/></svg>
<div class="abs t" style="left:87.6px;top:339.27px;color:#2a2a2a;letter-spacing:0.022px;">universal_arm (2) &lt;1&gt;</div>
<div class="abs bd" style="left:200.0px;top:338.88px;width:61px;letter-spacing:-0.153px">In progress</div>
<svg class="abs" style="left:52.40px;top:362.56px" width="10" height="12" ><use href="#i-chr"/></svg>
<svg class="abs" style="left:70.30px;top:361.76px" width="13.4" height="13.4" ><use href="#i-asm"/></svg>
<div class="abs t" style="left:87.6px;top:360.96px;color:#2a2a2a;letter-spacing:-0.098px;">Shock Front (1) &lt;1&gt;</div>
<div class="abs bd" style="left:188.0px;top:360.56px;width:61px;letter-spacing:-0.153px">In progress</div>
<svg class="abs" style="left:52.40px;top:384.25px" width="10" height="12" ><use href="#i-chr"/></svg>
<div class="abs t" style="left:68.2px;top:382.65px;color:#2a2a2a;letter-spacing:0.000px;">Items (0)</div>
<svg class="abs" style="left:52.40px;top:405.94px" width="10" height="12" ><use href="#i-chr"/></svg>
<div class="abs t" style="left:68.2px;top:404.34px;color:#2a2a2a;letter-spacing:0.000px;">Mate Features (0)</div>
<svg class="abs" style="left:54.60px;top:426.62px" width="13.4" height="13.4" ><use href="#i-part"/></svg>
<div class="abs t" style="left:71.6px;top:426.02px;color:#2a2a2a;letter-spacing:-0.202px;">GND Wire &lt;1&gt;</div>
<div class="abs bd" style="left:146.0px;top:425.62px;width:61px;letter-spacing:-0.153px">In progress</div>
<svg class="abs" style="left:411.00px;top:427.02px" width="13.4" height="13.4" ><use href="#i-mate"/></svg>
<svg class="abs" style="left:36.40px;top:449.31px" width="10" height="12" ><use href="#i-chr"/></svg>
<svg class="abs" style="left:54.60px;top:448.51px" width="13.4" height="13.4" ><use href="#i-asm"/></svg>
<div class="abs t" style="left:71.6px;top:447.71px;color:#2a2a2a;letter-spacing:0.070px;">Drive Train Asm &lt;1&gt;</div>
<div class="abs bd" style="left:177.0px;top:447.31px;width:61px;letter-spacing:-0.153px">In progress</div>
<svg class="abs" style="left:36.40px;top:471.00px" width="10" height="12" ><use href="#i-chr"/></svg>
<svg class="abs" style="left:54.60px;top:470.20px" width="13.4" height="13.4" ><use href="#i-asm"/></svg>
<div class="abs t" style="left:71.6px;top:469.40px;color:#2a2a2a;letter-spacing:0.089px;">Steering Asm &lt;1&gt;</div>
<div class="abs bd" style="left:165.0px;top:469.00px;width:61px;letter-spacing:-0.153px">In progress</div>
<svg class="abs" style="left:36.40px;top:492.69px" width="10" height="12" ><use href="#i-chr"/></svg>
<svg class="abs" style="left:54.60px;top:491.89px" width="13.4" height="13.4" ><use href="#i-asm"/></svg>
<div class="abs t" style="left:71.6px;top:491.09px;color:#2a2a2a;letter-spacing:-0.057px;">Rear Right Corner &lt;1&gt;</div>
<div class="abs bd" style="left:186.0px;top:490.69px;width:61px;letter-spacing:-0.153px">In progress</div>
<svg class="abs" style="left:54.60px;top:513.38px" width="13.4" height="13.4" ><use href="#i-part"/></svg>
<div class="abs t" style="left:71.6px;top:512.77px;color:#2a2a2a;letter-spacing:-0.219px;">PWR Wire &lt;1&gt;</div>
<div class="abs bd" style="left:147.0px;top:512.38px;width:61px;letter-spacing:-0.153px">In progress</div>
<svg class="abs" style="left:411.00px;top:513.77px" width="13.4" height="13.4" ><use href="#i-mate"/></svg>
<svg class="abs" style="left:54.60px;top:535.06px" width="13.4" height="13.4" ><use href="#i-part"/></svg>
<div class="abs t" style="left:71.6px;top:534.46px;color:#2a2a2a;letter-spacing:-0.195px;">ESC YEL Wire &lt;1&gt;</div>
<div class="abs bd" style="left:166.5px;top:534.06px;width:61px;letter-spacing:-0.153px">In progress</div>
<svg class="abs" style="left:411.00px;top:535.46px" width="13.4" height="13.4" ><use href="#i-mate"/></svg>
<svg class="abs" style="left:54.60px;top:556.75px" width="13.4" height="13.4" ><use href="#i-part"/></svg>
<div class="abs t" style="left:71.6px;top:556.15px;color:#2a2a2a;letter-spacing:-0.359px;">ESC ORG Wire &lt;1&gt;</div>
<div class="abs bd" style="left:168.7px;top:555.75px;width:61px;letter-spacing:-0.153px">In progress</div>
<svg class="abs" style="left:411.00px;top:557.15px" width="13.4" height="13.4" ><use href="#i-mate"/></svg>
<svg class="abs" style="left:54.60px;top:578.44px" width="13.4" height="13.4" ><use href="#i-part"/></svg>
<div class="abs t" style="left:71.6px;top:577.84px;color:#2a2a2a;letter-spacing:-0.189px;">ESC BLU Wire &lt;1&gt;</div>
<div class="abs bd" style="left:167.8px;top:577.44px;width:61px;letter-spacing:-0.153px">In progress</div>
<svg class="abs" style="left:411.00px;top:578.84px" width="13.4" height="13.4" ><use href="#i-mate"/></svg>
<svg class="abs" style="left:54.60px;top:600.12px" width="13.4" height="13.4" ><use href="#i-part"/></svg>
<div class="abs t" style="left:71.6px;top:599.52px;color:#2a2a2a;letter-spacing:-0.019px;width:203.5px;overflow:hidden;">Socket button head screw M3x0.5 x 8 &lt;4&gt;</div>
<div class="abs bd" style="left:280.0px;top:599.12px;width:111.5px;letter-spacing:-0.133px">Not revision managed</div>
<svg class="abs" style="left:411.00px;top:600.52px" width="13.4" height="13.4" ><use href="#i-mate"/></svg>
<svg class="abs" style="left:54.60px;top:621.81px" width="13.4" height="13.4" ><use href="#i-part"/></svg>
<div class="abs t" style="left:71.6px;top:621.21px;color:#2a2a2a;letter-spacing:-0.019px;width:203.5px;overflow:hidden;">Socket button head screw M3x0.5 x 8 &lt;5&gt;</div>
<div class="abs bd" style="left:280.0px;top:620.81px;width:111.5px;letter-spacing:-0.133px">Not revision managed</div>
<svg class="abs" style="left:411.00px;top:622.21px" width="13.4" height="13.4" ><use href="#i-mate"/></svg>
<svg class="abs" style="left:54.60px;top:643.50px" width="13.4" height="13.4" ><use href="#i-part"/></svg>
<div class="abs t" style="left:71.6px;top:642.90px;color:#2a2a2a;letter-spacing:-0.019px;width:203.5px;overflow:hidden;">Socket button head screw M3x0.5 x 8 &lt;1&gt;</div>
<div class="abs bd" style="left:280.0px;top:642.50px;width:111.5px;letter-spacing:-0.133px">Not revision managed</div>
<svg class="abs" style="left:411.00px;top:643.90px" width="13.4" height="13.4" ><use href="#i-mate"/></svg>
<svg class="abs" style="left:54.60px;top:665.19px" width="13.4" height="13.4" ><use href="#i-part"/></svg>
<div class="abs t" style="left:71.6px;top:664.59px;color:#2a2a2a;letter-spacing:-0.019px;width:203.5px;overflow:hidden;">Socket button head screw M3x0.5 x 8 &lt;2&gt;</div>
<div class="abs bd" style="left:280.0px;top:664.19px;width:111.5px;letter-spacing:-0.133px">Not revision managed</div>
<svg class="abs" style="left:411.00px;top:665.59px" width="13.4" height="13.4" ><use href="#i-mate"/></svg>
<svg class="abs" style="left:54.60px;top:686.88px" width="13.4" height="13.4" ><use href="#i-part"/></svg>
<div class="abs t" style="left:71.6px;top:686.27px;color:#2a2a2a;letter-spacing:-0.019px;width:203.5px;overflow:hidden;">Socket button head screw M3x0.5 x 8 &lt;6&gt;</div>
<div class="abs bd" style="left:280.0px;top:685.88px;width:111.5px;letter-spacing:-0.133px">Not revision managed</div>
<svg class="abs" style="left:411.00px;top:687.27px" width="13.4" height="13.4" ><use href="#i-mate"/></svg>
<svg class="abs" style="left:54.60px;top:708.56px" width="13.4" height="13.4" ><use href="#i-part"/></svg>
<div class="abs t" style="left:71.6px;top:707.96px;color:#2a2a2a;letter-spacing:-0.019px;width:203.5px;overflow:hidden;">Socket button head screw M3x0.5 x 8 &lt;7&gt;</div>
<div class="abs bd" style="left:280.0px;top:707.56px;width:111.5px;letter-spacing:-0.133px">Not revision managed</div>
<svg class="abs" style="left:411.00px;top:708.96px" width="13.4" height="13.4" ><use href="#i-mate"/></svg>
<svg class="abs" style="left:54.60px;top:730.25px" width="13.4" height="13.4" ><use href="#i-part"/></svg>
<div class="abs t" style="left:71.6px;top:729.65px;color:#2a2a2a;letter-spacing:-0.019px;width:203.5px;overflow:hidden;">Socket button head screw M3x0.5 x 8 &lt;8&gt;</div>
<div class="abs bd" style="left:280.0px;top:729.25px;width:111.5px;letter-spacing:-0.133px">Not revision managed</div>
<svg class="abs" style="left:411.00px;top:730.65px" width="13.4" height="13.4" ><use href="#i-mate"/></svg>
<svg class="abs" style="left:54.60px;top:751.94px" width="13.4" height="13.4" ><use href="#i-part"/></svg>
<div class="abs t" style="left:71.6px;top:751.34px;color:#2a2a2a;letter-spacing:-0.019px;width:203.5px;overflow:hidden;">Socket button head screw M3x0.5 x 8 &lt;3&gt;</div>
<div class="abs bd" style="left:280.0px;top:750.94px;width:111.5px;letter-spacing:-0.133px">Not revision managed</div>
<svg class="abs" style="left:411.00px;top:752.34px" width="13.4" height="13.4" ><use href="#i-mate"/></svg>
<svg class="abs" style="left:35.40px;top:775.62px" width="12" height="10" ><use href="#i-chd"/></svg>
<div class="abs t" style="left:52.6px;top:773.02px;color:#2a2a2a;letter-spacing:0.000px;">Items (0)</div>
<svg class="abs" style="left:35.40px;top:797.31px" width="12" height="10" ><use href="#i-chd"/></svg>
<div class="abs t" style="left:52.6px;top:794.71px;color:#2a2a2a;letter-spacing:0.000px;">Loads (0)</div>
<svg class="abs" style="left:35.40px;top:819.00px" width="12" height="10" ><use href="#i-chd"/></svg>
<div class="abs t" style="left:52.6px;top:816.40px;color:#2a2a2a;letter-spacing:0.000px;">Mate Features (0)</div>
<div class="abs" style="left:269px;top:592.3px;width:134.2px;height:184.2px;border:4px solid #f0220f"></div>
</div>

<!-- TABS -->
<div class="abs" id="tabs"></div>
<div class="abs" id="tabsc" style="left:0;top:0">
<div class="abs" style="left:34px;top:875px;width:32px;height:23px;background:#d2d2d2"></div>
<svg class="abs" style="left:41px;top:880px" width="13" height="13" viewBox="0 0 13 13"><path d="M6.5,.5V12.5M.5,6.5H12.5" stroke="#3a3a3a" stroke-width="1.7"/></svg>
<div class="abs" style="left:66px;top:875px;width:94px;height:23px;background:#ffffff;border-radius:0"></div>
<svg class="abs" style="left:75.00px;top:878.20px" width="15" height="14.6" ><use href="#i-asm"/></svg>
<div class="abs tt" style="left:93.5px;top:878.1px;color:#262626;letter-spacing:-0.347px">TOP LEVEL</div>
<div class="abs" style="left:162px;top:876px;width:108px;height:22px;background:#ececec;border-radius:4px 4px 0 0"></div>
<svg class="abs" style="left:170px;top:878px" width="17" height="16" viewBox="0 0 17 16"><path d="M.8,4V.8H4 M13,.8H16.2V4 M16.2,12V15.2H13 M4,15.2H.8V12" fill="none" stroke="#333" stroke-width="1.5"/><circle cx="8.5" cy="8" r="5.6" fill="#777" stroke="#333" stroke-width="1"/><circle cx="8.5" cy="9.4" r="3" fill="#e6e6e6"/><circle cx="6.6" cy="6" r="1.2" fill="#e6e6e6"/></svg>
<div class="abs tt" style="left:189.5px;top:878.1px;color:#5c5c5c;letter-spacing:0.020px">Render Studio</div>
<div class="abs" style="left:272px;top:876px;width:127px;height:22px;background:#ececec;border-radius:4px 4px 0 0"></div>
<svg class="abs" style="left:281.00px;top:878.20px" width="15" height="14.6" ><use href="#i-asm"/></svg>
<div class="abs tt" style="left:299.5px;top:878.1px;color:#5c5c5c;letter-spacing:-0.010px">Rear Right Corner</div>
<div class="abs" style="left:401px;top:876px;width:119px;height:22px;background:#ececec;border-radius:4px 4px 0 0"></div>
<svg class="abs" style="left:410.00px;top:878.20px" width="15" height="14.6" ><use href="#i-asm"/></svg>
<div class="abs tt" style="left:428.5px;top:878.1px;color:#5c5c5c;letter-spacing:0.184px">Drive Train Asm</div>
<div class="abs" style="left:522px;top:876px;width:130px;height:22px;background:#ececec;border-radius:4px 4px 0 0"></div>
<svg class="abs" style="left:530.50px;top:878.20px" width="15" height="14.6" ><use href="#i-asm"/></svg>
<div class="abs tt" style="left:548.5px;top:878.1px;color:#5c5c5c;letter-spacing:0.081px">Front Right Corner</div>
<div class="abs" style="left:655px;top:876px;width:125px;height:22px;background:#ececec;border-radius:4px 4px 0 0"></div>
<svg class="abs" style="left:663.50px;top:878.20px" width="15" height="14.6" ><use href="#i-asm"/></svg>
<div class="abs tt" style="left:681.5px;top:878.1px;color:#5c5c5c;letter-spacing:0.145px">Front Left Corner</div>
<div class="abs" style="left:783px;top:876px;width:119px;height:22px;background:#ececec;border-radius:4px 4px 0 0"></div>
<svg class="abs" style="left:790.00px;top:878.20px" width="15" height="14.6" ><use href="#i-asm"/></svg>
<div class="abs tt" style="left:808px;top:878.1px;color:#5c5c5c;letter-spacing:0.054px">Rear Left Corner</div>
<div class="abs" style="left:905px;top:876px;width:150px;height:22px;background:#ececec;border-radius:4px 4px 0 0"></div>
<svg class="abs" style="left:912.00px;top:878.20px" width="15" height="14.6" ><use href="#i-asm"/></svg>
<div class="abs tt" style="left:930.5px;top:878.1px;color:#5c5c5c;letter-spacing:-0.009px">Rear Right Suspension</div>
<div class="abs" style="left:1058px;top:876px;width:134px;height:22px;background:#ececec;border-radius:4px 4px 0 0"></div>
<svg class="abs" style="left:1065.50px;top:878.20px" width="15" height="14.6" ><use href="#i-asm"/></svg>
<div class="abs tt" style="left:1084px;top:878.1px;color:#5c5c5c;letter-spacing:0.207px">Transmission Front</div>
<div class="abs" style="left:1195px;top:876px;width:153px;height:22px;background:#ececec;border-radius:4px 4px 0 0"></div>
<svg class="abs" style="left:1203.00px;top:878.20px" width="15" height="14.6" ><use href="#i-asm"/></svg>
<div class="abs tt" style="left:1221.5px;top:878.1px;color:#5c5c5c;letter-spacing:0.043px">Front Right Suspension</div>
<div class="abs" style="left:1351px;top:876px;width:147px;height:22px;background:#ececec;border-radius:4px 4px 0 0"></div>
<svg class="abs" style="left:1359.50px;top:878.20px" width="15" height="14.6" ><use href="#i-asm"/></svg>
<div class="abs tt" style="left:1378px;top:878.1px;color:#5c5c5c;letter-spacing:0.118px">Front Left Suspension</div>
<div class="abs" style="left:1501px;top:876px;width:139px;height:22px;background:#ececec;border-radius:4px 4px 0 0"></div>
<svg class="abs" style="left:1510.00px;top:878.20px" width="15" height="14.6" ><use href="#i-asm"/></svg>
<div class="abs tt" style="left:1528.5px;top:878.1px;color:#5c5c5c;letter-spacing:-0.083px">Rear Left Suspension</div>
<div class="abs" style="left:67px;top:895.6px;width:92px;height:2.4px;background:#2744a8;border-radius:1px"></div>
<div class="abs" style="left:1558px;top:875px;width:42px;height:23px;background:#e4e4e4"></div>
<svg class="abs" style="left:1565px;top:880px" width="8" height="13" viewBox="0 0 8 13"><path d="M6.4,1.2 L1.6,6.5 L6.4,11.8" fill="none" stroke="#b4b4b4" stroke-width="1.8"/></svg>
<svg class="abs" style="left:1586px;top:880px" width="8" height="13" viewBox="0 0 8 13"><path d="M1.6,1.2 L6.4,6.5 L1.6,11.8" fill="none" stroke="#333" stroke-width="1.8"/></svg>
</div>
<div class="abs" id="botline"></div>
</body>
</html>
